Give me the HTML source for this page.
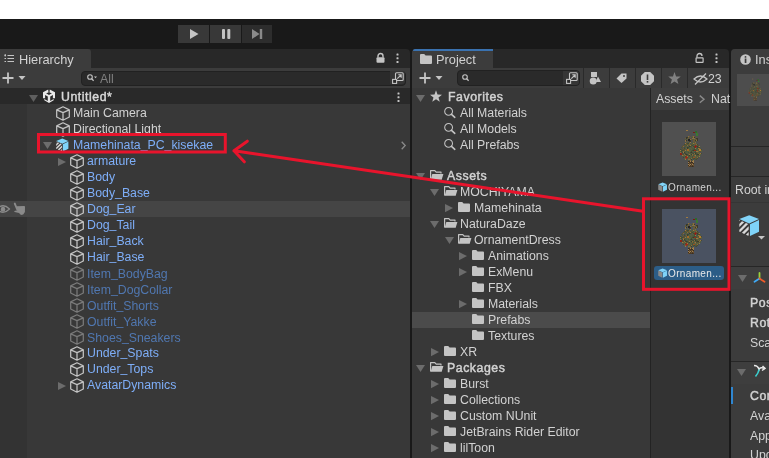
<!DOCTYPE html>
<html><head><meta charset="utf-8">
<style>
*{margin:0;padding:0;box-sizing:border-box}
html,body{width:769px;height:458px;overflow:hidden;background:#ffffff;font-family:"Liberation Sans",sans-serif;font-size:12.3px;color:#d2d2d2}
.a{position:absolute}
.pb{position:absolute;top:25px;height:18px;background:#383838}
.tabbar{background:#282828}
.tab{background:#3c3c3c}
.t{position:absolute;white-space:nowrap;line-height:16px;height:16px;-webkit-font-smoothing:antialiased;will-change:transform}
.b{font-weight:normal;-webkit-text-stroke:0.45px currentColor;letter-spacing:0.55px}
.u{position:relative;top:-1.5px}
.blue{color:#7eaef8}
.dim{color:#5077b0}
svg{position:absolute;overflow:visible}
</style></head><body>
<div class="a" style="left:0;top:19px;width:769px;height:30px;background:#191919"></div>
<div class="pb" style="left:178px;width:31px"></div>
<div class="pb" style="left:210px;width:31px"></div>
<div class="pb" style="left:242px;width:30px;background:#2d2d2d"></div>
<svg style="left:0;top:0" width="769" height="60">
 <path d="M190 29 L198.5 34 L190 39 Z" fill="#c4c4c4"/>
 <rect x="222" y="29" width="3" height="10" rx="1" fill="#c4c4c4"/>
 <rect x="227.3" y="29" width="3" height="10" rx="1" fill="#c4c4c4"/>
 <path d="M252 29 L259.5 34 L252 39 Z" fill="#8a8a8a"/>
 <rect x="259.8" y="29" width="2.4" height="10" fill="#8a8a8a"/>
</svg>
<div class="a" style="left:0;top:48px;width:769px;height:410px;background:#191919"></div>

<div class="a tabbar" style="left:0;top:49px;width:410px;height:19px;border-radius:0 4px 0 0"></div>
<div class="a tab" style="left:0;top:49px;width:91px;height:19px;border-radius:0 3px 0 0"></div>
<div class="a" style="left:0;top:68px;width:410px;height:20px;background:#3c3c3c"></div>
<div class="a" style="left:81px;top:70.5px;width:325px;height:15px;background:#2a2a2a;border:1px solid #212121;border-radius:4px"></div>
<div class="a" style="left:390px;top:71px;width:15px;height:13px;background:#353535;border-radius:0 3px 3px 0"></div>
<div class="a" style="left:0;top:88px;width:410px;height:16px;background:#292929"></div>
<div class="a" style="left:0;top:104px;width:410px;height:354px;background:#383838"></div>
<div class="a" style="left:0;top:104px;width:27px;height:354px;background:#333333"></div>
<div class="a" style="left:0;top:201px;width:410px;height:16px;background:#454545"></div>

<svg style="left:4px;top:54px" width="10" height="9" viewBox="0 0 10 9"><path d="M0.5 1.5 H2 M0.5 4.5 H2 M0.5 7.5 H2 M3.5 1.5 H10 M3.5 4.5 H10 M3.5 7.5 H10" stroke="#c4c4c4" stroke-width="1.1"/><path d="M1.2 0 V2.5" stroke="#c4c4c4" stroke-width="1"/></svg>
<div class="t " style="left:18.5px;top:51.5px;font-size:12.8px">Hierarchy</div>
<svg style="left:376px;top:53px" width="9" height="10" viewBox="0 0 9 10"><path d="M2 4.5 V3 A2.5 2.5 0 0 1 7 3 V4.5" fill="none" stroke="#c4c4c4" stroke-width="1.4"/><rect x="0.5" y="4.2" width="8" height="5.5" rx="1" fill="#c4c4c4"/></svg>
<svg style="left:395.5px;top:53px" width="3" height="10"><rect x="0.5" y="0.5" width="2" height="2" rx="0.5" fill="#c4c4c4"/><rect x="0.5" y="4.2" width="2" height="2" rx="0.5" fill="#c4c4c4"/><rect x="0.5" y="7.9" width="2" height="2" rx="0.5" fill="#c4c4c4"/></svg>
<svg style="left:2px;top:72px" width="22" height="12"><path d="M6 0.5 V11.5 M0.5 6 H11.5" stroke="#c4c4c4" stroke-width="1.8"/><path d="M16.5 4 H23.5 L20 8 Z" fill="#c4c4c4"/></svg>
<svg style="left:87px;top:74px" width="10" height="8"><circle cx="3" cy="3" r="2.3" fill="none" stroke="#c4c4c4" stroke-width="1.1"/><path d="M4.6 4.6 L6.6 6.8" stroke="#c4c4c4" stroke-width="1.3"/><path d="M7 2.4 H10 L8.5 4.2 Z" fill="#c4c4c4"/></svg>
<div class="t " style="left:100px;top:71px;color:#7f7f7f">All</div>
<svg style="left:392px;top:72px" width="12" height="12" viewBox="0 0 12 12"><rect x="3.5" y="0.8" width="7.7" height="7.7" rx="1" fill="none" stroke="#c4c4c4" stroke-width="1.1"/><rect x="0.6" y="7.4" width="4" height="4" fill="#2a2a2a" stroke="#c4c4c4" stroke-width="1.1"/><path d="M5.3 6.7 L9 3 M6.3 2.8 H9.2 V5.7" fill="none" stroke="#c4c4c4" stroke-width="1.1"/></svg>
<svg style="left:29px;top:94.5px" width="9" height="7" viewBox="0 0 9 7"><path d="M0 0 H9 L4.5 7 Z" fill="#5e5e5e"/></svg>
<svg style="left:42px;top:89.4px" width="14" height="15" viewBox="0 0 14 15">
<path d="M6.2 0.6 L1 3.3 L1 9.3 L3.1 9.3 L3.1 6.1 L5.8 7.5 L5.8 11.9 L2.3 9.9 L2.3 11.3 L7 14 L11.7 11.3 L11.7 9.9 L8.2 11.9 L8.2 7.5 L10.9 6.1 L10.9 9.3 L13 9.3 L13 3.3 L7.8 0.6 L7.5 3.4 L9.9 4.3 L7 5.9 L4.1 4.3 L6.5 3.4 Z" fill="#e8e8e8"/>
</svg>
<div class="t b" style="left:60.5px;top:89px;color:#d8d8d8">Untitled*</div>
<svg style="left:396.5px;top:92px" width="3" height="10"><rect x="0.5" y="0.5" width="2" height="2" rx="0.5" fill="#c4c4c4"/><rect x="0.5" y="4.2" width="2" height="2" rx="0.5" fill="#c4c4c4"/><rect x="0.5" y="7.9" width="2" height="2" rx="0.5" fill="#c4c4c4"/></svg>
<svg style="left:56px;top:105.5px" width="14" height="15" viewBox="0 0 14 15"><path d="M7 0.8 L13.3 3.9 V11 L7 14.2 L0.7 11 V3.9 Z M0.7 3.9 L7 6.6 L13.3 3.9 M7 6.6 V14.2" fill="none" stroke="#c4c4c4" stroke-width="1.25" stroke-linejoin="round"/></svg>
<div class="t " style="left:72.8px;top:105px;">Main Camera</div>
<svg style="left:56px;top:121.5px" width="14" height="15" viewBox="0 0 14 15"><path d="M7 0.8 L13.3 3.9 V11 L7 14.2 L0.7 11 V3.9 Z M0.7 3.9 L7 6.6 L13.3 3.9 M7 6.6 V14.2" fill="none" stroke="#c4c4c4" stroke-width="1.25" stroke-linejoin="round"/></svg>
<div class="t " style="left:72.8px;top:121px;">Directional Light</div>
<svg style="left:43px;top:142.3px" width="9" height="7" viewBox="0 0 9 7"><path d="M0 0 H9 L4.5 7 Z" fill="#6c6c6c"/></svg>
<svg style="left:56px;top:137.5px" width="13" height="14" viewBox="0 0 13 14">
<path d="M6.3 0.6 L12.4 3 L6.3 5.8 L0.2 3 Z" fill="#82d4f8"/>
<path d="M0.2 3.6 L6 6.3 V13.5 L0.2 10.8 Z" fill="#3a3a3a"/>
<path d="M0.20 4.40 L0.20 3.60 L0.75 3.85 Z M0.20 8.00 L0.20 6.00 L1.84 4.36 L3.20 5.00 Z M0.20 9.60 L4.29 5.51 L5.66 6.14 L0.75 11.05 L0.20 10.80 Z M6.00 7.40 L6.00 9.40 L3.20 12.20 L1.84 11.56 Z M6.00 11.00 L6.00 13.00 L5.66 13.34 L4.29 12.71 Z" fill="#d8d8d8"/>
<path d="M6.8 6.3 L12.4 3.6 V10.8 L6.8 13.5 Z" fill="#7fd4f9"/>
</svg>
<div class="t blue" style="left:72.9px;top:137px;">Mamehinata<span class="u">_</span>PC<span class="u">_</span>kisekae</div>
<svg style="left:400.5px;top:141px" width="5" height="9"><path d="M0.7 0.7 L4.2 4.5 L0.7 8.3" fill="none" stroke="#8a8a8a" stroke-width="1.3"/></svg>
<svg style="left:58px;top:158.0px" width="8" height="8" viewBox="0 0 8 8"><path d="M0 0 L8 4.0 L0 8 Z" fill="#6c6c6c"/></svg>
<svg style="left:69.5px;top:153.5px" width="14" height="15" viewBox="0 0 14 15"><path d="M7 0.8 L13.3 3.9 V11 L7 14.2 L0.7 11 V3.9 Z M0.7 3.9 L7 6.6 L13.3 3.9 M7 6.6 V14.2" fill="none" stroke="#c4c4c4" stroke-width="1.25" stroke-linejoin="round"/></svg>
<div class="t blue" style="left:86.8px;top:153px;">armature</div>
<svg style="left:69.5px;top:169.5px" width="14" height="15" viewBox="0 0 14 15"><path d="M7 0.8 L13.3 3.9 V11 L7 14.2 L0.7 11 V3.9 Z M0.7 3.9 L7 6.6 L13.3 3.9 M7 6.6 V14.2" fill="none" stroke="#c4c4c4" stroke-width="1.25" stroke-linejoin="round"/></svg>
<div class="t blue" style="left:86.8px;top:169px;">Body</div>
<svg style="left:69.5px;top:185.5px" width="14" height="15" viewBox="0 0 14 15"><path d="M7 0.8 L13.3 3.9 V11 L7 14.2 L0.7 11 V3.9 Z M0.7 3.9 L7 6.6 L13.3 3.9 M7 6.6 V14.2" fill="none" stroke="#c4c4c4" stroke-width="1.25" stroke-linejoin="round"/></svg>
<div class="t blue" style="left:86.8px;top:185px;">Body<span class="u">_</span>Base</div>
<svg style="left:69.5px;top:201.5px" width="14" height="15" viewBox="0 0 14 15"><path d="M7 0.8 L13.3 3.9 V11 L7 14.2 L0.7 11 V3.9 Z M0.7 3.9 L7 6.6 L13.3 3.9 M7 6.6 V14.2" fill="none" stroke="#c4c4c4" stroke-width="1.25" stroke-linejoin="round"/></svg>
<div class="t blue" style="left:86.8px;top:201px;">Dog<span class="u">_</span>Ear</div>
<svg style="left:69.5px;top:217.5px" width="14" height="15" viewBox="0 0 14 15"><path d="M7 0.8 L13.3 3.9 V11 L7 14.2 L0.7 11 V3.9 Z M0.7 3.9 L7 6.6 L13.3 3.9 M7 6.6 V14.2" fill="none" stroke="#c4c4c4" stroke-width="1.25" stroke-linejoin="round"/></svg>
<div class="t blue" style="left:86.8px;top:217px;">Dog<span class="u">_</span>Tail</div>
<svg style="left:69.5px;top:233.5px" width="14" height="15" viewBox="0 0 14 15"><path d="M7 0.8 L13.3 3.9 V11 L7 14.2 L0.7 11 V3.9 Z M0.7 3.9 L7 6.6 L13.3 3.9 M7 6.6 V14.2" fill="none" stroke="#c4c4c4" stroke-width="1.25" stroke-linejoin="round"/></svg>
<div class="t blue" style="left:86.8px;top:233px;">Hair<span class="u">_</span>Back</div>
<svg style="left:69.5px;top:249.5px" width="14" height="15" viewBox="0 0 14 15"><path d="M7 0.8 L13.3 3.9 V11 L7 14.2 L0.7 11 V3.9 Z M0.7 3.9 L7 6.6 L13.3 3.9 M7 6.6 V14.2" fill="none" stroke="#c4c4c4" stroke-width="1.25" stroke-linejoin="round"/></svg>
<div class="t blue" style="left:86.8px;top:249px;">Hair<span class="u">_</span>Base</div>
<svg style="left:69.5px;top:265.5px" width="14" height="15" viewBox="0 0 14 15"><path d="M7 0.8 L13.3 3.9 V11 L7 14.2 L0.7 11 V3.9 Z M0.7 3.9 L7 6.6 L13.3 3.9 M7 6.6 V14.2" fill="none" stroke="#7a7a7a" stroke-width="1.25" stroke-linejoin="round"/></svg>
<div class="t dim" style="left:86.8px;top:265.8px;">Item<span class="u">_</span>BodyBag</div>
<svg style="left:69.5px;top:281.5px" width="14" height="15" viewBox="0 0 14 15"><path d="M7 0.8 L13.3 3.9 V11 L7 14.2 L0.7 11 V3.9 Z M0.7 3.9 L7 6.6 L13.3 3.9 M7 6.6 V14.2" fill="none" stroke="#7a7a7a" stroke-width="1.25" stroke-linejoin="round"/></svg>
<div class="t dim" style="left:86.8px;top:281.8px;">Item<span class="u">_</span>DogCollar</div>
<svg style="left:69.5px;top:297.5px" width="14" height="15" viewBox="0 0 14 15"><path d="M7 0.8 L13.3 3.9 V11 L7 14.2 L0.7 11 V3.9 Z M0.7 3.9 L7 6.6 L13.3 3.9 M7 6.6 V14.2" fill="none" stroke="#7a7a7a" stroke-width="1.25" stroke-linejoin="round"/></svg>
<div class="t dim" style="left:86.8px;top:297.8px;">Outfit<span class="u">_</span>Shorts</div>
<svg style="left:69.5px;top:313.5px" width="14" height="15" viewBox="0 0 14 15"><path d="M7 0.8 L13.3 3.9 V11 L7 14.2 L0.7 11 V3.9 Z M0.7 3.9 L7 6.6 L13.3 3.9 M7 6.6 V14.2" fill="none" stroke="#7a7a7a" stroke-width="1.25" stroke-linejoin="round"/></svg>
<div class="t dim" style="left:86.8px;top:313.8px;">Outfit<span class="u">_</span>Yakke</div>
<svg style="left:69.5px;top:329.5px" width="14" height="15" viewBox="0 0 14 15"><path d="M7 0.8 L13.3 3.9 V11 L7 14.2 L0.7 11 V3.9 Z M0.7 3.9 L7 6.6 L13.3 3.9 M7 6.6 V14.2" fill="none" stroke="#7a7a7a" stroke-width="1.25" stroke-linejoin="round"/></svg>
<div class="t dim" style="left:86.8px;top:329.8px;">Shoes<span class="u">_</span>Sneakers</div>
<svg style="left:69.5px;top:345.5px" width="14" height="15" viewBox="0 0 14 15"><path d="M7 0.8 L13.3 3.9 V11 L7 14.2 L0.7 11 V3.9 Z M0.7 3.9 L7 6.6 L13.3 3.9 M7 6.6 V14.2" fill="none" stroke="#c4c4c4" stroke-width="1.25" stroke-linejoin="round"/></svg>
<div class="t blue" style="left:86.8px;top:345px;">Under<span class="u">_</span>Spats</div>
<svg style="left:69.5px;top:361.5px" width="14" height="15" viewBox="0 0 14 15"><path d="M7 0.8 L13.3 3.9 V11 L7 14.2 L0.7 11 V3.9 Z M0.7 3.9 L7 6.6 L13.3 3.9 M7 6.6 V14.2" fill="none" stroke="#c4c4c4" stroke-width="1.25" stroke-linejoin="round"/></svg>
<div class="t blue" style="left:86.8px;top:361px;">Under<span class="u">_</span>Tops</div>
<svg style="left:58px;top:382.0px" width="8" height="8" viewBox="0 0 8 8"><path d="M0 0 L8 4.0 L0 8 Z" fill="#6c6c6c"/></svg>
<svg style="left:69.5px;top:377.5px" width="14" height="15" viewBox="0 0 14 15"><path d="M7 0.8 L13.3 3.9 V11 L7 14.2 L0.7 11 V3.9 Z M0.7 3.9 L7 6.6 L13.3 3.9 M7 6.6 V14.2" fill="none" stroke="#c4c4c4" stroke-width="1.25" stroke-linejoin="round"/></svg>
<div class="t blue" style="left:86.8px;top:377px;">AvatarDynamics</div>
<svg style="left:-4px;top:204px" width="14" height="10" viewBox="0 0 14 10"><path d="M0.5 5 Q7 -1.5 13.5 5 Q7 11.5 0.5 5 Z" fill="none" stroke="#8a8a8a" stroke-width="1.2"/><path d="M4.5 5.5 A2.6 2.6 0 0 0 9.5 5.5 Z" fill="#8a8a8a"/><circle cx="7" cy="5" r="2.2" fill="#8a8a8a"/></svg>
<svg style="left:13px;top:202px" width="13" height="14" viewBox="0 0 13 14"><path d="M1.8 1.6 L4.2 7.5" stroke="#8a8a8a" stroke-width="1.9" stroke-linecap="round"/><path d="M3.8 4.3 L11.3 4 Q12 4 12 5 L11.9 10 L10.2 12.6 L8 13 L6 11 L1.6 9.9 Q1 9.5 1.4 8.9 L4.3 8.2 Z" fill="#8a8a8a"/></svg>
<div class="a tabbar" style="left:412px;top:49px;width:317px;height:19px;border-radius:4px 4px 0 0"></div>
<div class="a tab" style="left:412px;top:49px;width:81px;height:19px;border-radius:4px 3px 0 0"></div>
<div class="a" style="left:413px;top:49px;width:80px;height:2px;background:#3a72b0;border-radius:2px 0 0 0"></div>
<div class="a" style="left:412px;top:68px;width:317px;height:20px;background:#3c3c3c"></div>
<div class="a" style="left:457px;top:70px;width:123px;height:15.5px;background:#2a2a2a;border:1px solid #212121;border-radius:4px"></div>
<div class="a" style="left:563px;top:71px;width:16px;height:13.5px;background:#353535;border-radius:0 3px 3px 0"></div>
<div class="a" style="left:583px;top:68px;width:1px;height:20px;background:#2a2a2a"></div>
<div class="a" style="left:609px;top:68px;width:1px;height:20px;background:#2a2a2a"></div>
<div class="a" style="left:635px;top:68px;width:1px;height:20px;background:#2a2a2a"></div>
<div class="a" style="left:661px;top:68px;width:1px;height:20px;background:#2a2a2a"></div>
<div class="a" style="left:687px;top:68px;width:1px;height:20px;background:#2a2a2a"></div>
<div class="a" style="left:412px;top:88px;width:238px;height:370px;background:#383838"></div>
<div class="a" style="left:412px;top:312px;width:238px;height:16px;background:#4b4b4b"></div>
<div class="a" style="left:650px;top:88px;width:1px;height:370px;background:#232323"></div>
<div class="a" style="left:651px;top:88px;width:78px;height:370px;background:#333333"></div>
<div class="a" style="left:651px;top:88px;width:78px;height:22px;background:#3e3e3e"></div>

<svg style="left:420px;top:54px" width="12" height="10" viewBox="0 0 12 10"><path d="M0 1 Q0 0 1 0 H4.2 L5.6 1.6 H11 Q12 1.6 12 2.6 V9 Q12 10 11 10 H1 Q0 10 0 9 Z" fill="#c4c4c4"/></svg>
<div class="t " style="left:435.5px;top:51.5px;font-size:12.8px">Project</div>
<svg style="left:694.5px;top:53px" width="9" height="10" viewBox="0 0 9 10"><path d="M2 4.5 V3 A2.5 2.5 0 0 1 7 3" fill="none" stroke="#c4c4c4" stroke-width="1.3"/><rect x="1.1" y="4.8" width="7" height="4.6" rx="0.5" fill="none" stroke="#c4c4c4" stroke-width="1.2"/></svg>
<svg style="left:714.5px;top:53px" width="3" height="10"><rect x="0.5" y="0.5" width="2" height="2" rx="0.5" fill="#c4c4c4"/><rect x="0.5" y="4.2" width="2" height="2" rx="0.5" fill="#c4c4c4"/><rect x="0.5" y="7.9" width="2" height="2" rx="0.5" fill="#c4c4c4"/></svg>
<svg style="left:419px;top:72px" width="24" height="12"><path d="M6 0.5 V11.5 M0.5 6 H11.5" stroke="#c4c4c4" stroke-width="1.8"/><path d="M16.5 4 H23.5 L20 8 Z" fill="#c4c4c4"/></svg>
<svg style="left:462px;top:74px" width="8" height="8"><circle cx="3" cy="3" r="2.3" fill="none" stroke="#c4c4c4" stroke-width="1.1"/><path d="M4.6 4.6 L6.6 6.8" stroke="#c4c4c4" stroke-width="1.3"/></svg>
<svg style="left:566px;top:72px" width="12" height="12" viewBox="0 0 12 12"><rect x="3.5" y="0.8" width="7.7" height="7.7" rx="1" fill="none" stroke="#c4c4c4" stroke-width="1.1"/><rect x="0.6" y="7.4" width="4" height="4" fill="#2a2a2a" stroke="#c4c4c4" stroke-width="1.1"/><path d="M5.3 6.7 L9 3 M6.3 2.8 H9.2 V5.7" fill="none" stroke="#c4c4c4" stroke-width="1.1"/></svg>
<svg style="left:589px;top:72px" width="14" height="13" viewBox="0 0 14 13"><rect x="2" y="0" width="6" height="5" fill="#c4c4c4"/><circle cx="4.2" cy="9" r="3.5" fill="#c4c4c4"/><path d="M9 4.5 L12 10 H6.5 Z" fill="#c4c4c4"/></svg>
<svg style="left:616px;top:73px" width="11" height="10" viewBox="0 0 11 10"><path d="M0.5 5.5 L5.5 0.5 H10.5 V5.5 L5.5 10 Z" fill="#c4c4c4"/><circle cx="8" cy="3" r="1" fill="#3c3c3c"/></svg>
<svg style="left:641px;top:71.5px" width="13" height="13" viewBox="0 0 13 13"><path d="M3.8 0 H9.2 L13 3.8 V9.2 L9.2 13 H3.8 L0 9.2 V3.8 Z" fill="#c4c4c4"/><rect x="5.7" y="2.5" width="1.6" height="5.5" fill="#3c3c3c"/><rect x="5.7" y="9" width="1.6" height="1.6" fill="#3c3c3c"/></svg>
<svg style="left:667.5px;top:72px" width="13" height="12" viewBox="0 0 24 23"><path d="M12 0 L15 8.5 L24 8.8 L17 14.3 L19.5 23 L12 18 L4.5 23 L7 14.3 L0 8.8 L9 8.5 Z" fill="#808080"/></svg>
<svg style="left:693px;top:72px" width="15" height="13" viewBox="0 0 15 13"><path d="M1 7 Q7.5 1 14 7 Q7.5 13 1 7 Z" fill="none" stroke="#c4c4c4" stroke-width="1.2"/><path d="M2 12.5 L13 1.5" stroke="#c4c4c4" stroke-width="1.3"/></svg>
<div class="t " style="left:707.5px;top:71px;">23</div>
<svg style="left:416px;top:94.5px" width="9" height="7" viewBox="0 0 9 7"><path d="M0 0 H9 L4.5 7 Z" fill="#6c6c6c"/></svg>
<svg style="left:430px;top:90px" width="12" height="12" viewBox="0 0 24 23"><path d="M12 0 L15 8.5 L24 8.8 L17 14.3 L19.5 23 L12 18 L4.5 23 L7 14.3 L0 8.8 L9 8.5 Z" fill="#c4c4c4"/></svg>
<div class="t b" style="left:447.5px;top:89px;">Favorites</div>
<svg style="left:444px;top:107.3px" width="12" height="11" viewBox="0 0 12 11"><circle cx="4.6" cy="4.4" r="3.9" fill="none" stroke="#c4c4c4" stroke-width="1.05"/><path d="M7.5 7.3 L10.8 10.3" stroke="#c4c4c4" stroke-width="1.6" stroke-linecap="round"/></svg>
<div class="t " style="left:460.4px;top:105px;">All Materials</div>
<svg style="left:444px;top:123.3px" width="12" height="11" viewBox="0 0 12 11"><circle cx="4.6" cy="4.4" r="3.9" fill="none" stroke="#c4c4c4" stroke-width="1.05"/><path d="M7.5 7.3 L10.8 10.3" stroke="#c4c4c4" stroke-width="1.6" stroke-linecap="round"/></svg>
<div class="t " style="left:460.4px;top:121px;">All Models</div>
<svg style="left:444px;top:139.3px" width="12" height="11" viewBox="0 0 12 11"><circle cx="4.6" cy="4.4" r="3.9" fill="none" stroke="#c4c4c4" stroke-width="1.05"/><path d="M7.5 7.3 L10.8 10.3" stroke="#c4c4c4" stroke-width="1.6" stroke-linecap="round"/></svg>
<div class="t " style="left:460.4px;top:137px;">All Prefabs</div>
<svg style="left:416px;top:173.1px" width="9" height="7" viewBox="0 0 9 7"><path d="M0 0 H9 L4.5 7 Z" fill="#6c6c6c"/></svg>
<svg style="left:429.5px;top:169.6px" width="14" height="10" viewBox="0 0 14 10"><path d="M0.6 9.4 V0.6 H4.8 L6.2 2.2 H11 V3.6" fill="none" stroke="#c4c4c4" stroke-width="1.2" stroke-linejoin="round"/><path d="M2.3 4 H13.4 L11.7 9.8 H0.6 Z" fill="#c4c4c4"/></svg>
<div class="t b" style="left:447px;top:168.1px;">Assets</div>
<svg style="left:430.4px;top:189.1px" width="9" height="7" viewBox="0 0 9 7"><path d="M0 0 H9 L4.5 7 Z" fill="#6c6c6c"/></svg>
<svg style="left:444px;top:185.6px" width="14" height="10" viewBox="0 0 14 10"><path d="M0.6 9.4 V0.6 H4.8 L6.2 2.2 H11 V3.6" fill="none" stroke="#c4c4c4" stroke-width="1.2" stroke-linejoin="round"/><path d="M2.3 4 H13.4 L11.7 9.8 H0.6 Z" fill="#c4c4c4"/></svg>
<div class="t " style="left:459.7px;top:184.1px;">MOCHIYAMA</div>
<svg style="left:445.2px;top:203.79999999999998px" width="8" height="8.2" viewBox="0 0 8 8.2"><path d="M0 0 L8 4.1 L0 8.2 Z" fill="#6c6c6c"/></svg>
<svg style="left:458px;top:202.1px" width="12" height="10" viewBox="0 0 12 10"><path d="M0 1 Q0 0 1 0 H4.2 L5.6 1.6 H11 Q12 1.6 12 2.6 V9 Q12 10 11 10 H1 Q0 10 0 9 Z" fill="#c4c4c4"/></svg>
<div class="t " style="left:473.8px;top:200.1px;">Mamehinata</div>
<svg style="left:430.4px;top:221.1px" width="9" height="7" viewBox="0 0 9 7"><path d="M0 0 H9 L4.5 7 Z" fill="#6c6c6c"/></svg>
<svg style="left:444px;top:217.6px" width="14" height="10" viewBox="0 0 14 10"><path d="M0.6 9.4 V0.6 H4.8 L6.2 2.2 H11 V3.6" fill="none" stroke="#c4c4c4" stroke-width="1.2" stroke-linejoin="round"/><path d="M2.3 4 H13.4 L11.7 9.8 H0.6 Z" fill="#c4c4c4"/></svg>
<div class="t " style="left:459.7px;top:216.1px;">NaturaDaze</div>
<svg style="left:444.5px;top:237.1px" width="9" height="7" viewBox="0 0 9 7"><path d="M0 0 H9 L4.5 7 Z" fill="#6c6c6c"/></svg>
<svg style="left:457.9px;top:233.6px" width="14" height="10" viewBox="0 0 14 10"><path d="M0.6 9.4 V0.6 H4.8 L6.2 2.2 H11 V3.6" fill="none" stroke="#c4c4c4" stroke-width="1.2" stroke-linejoin="round"/><path d="M2.3 4 H13.4 L11.7 9.8 H0.6 Z" fill="#c4c4c4"/></svg>
<div class="t " style="left:473.8px;top:232.1px;">OrnamentDress</div>
<svg style="left:459px;top:251.79999999999998px" width="8" height="8.2" viewBox="0 0 8 8.2"><path d="M0 0 L8 4.1 L0 8.2 Z" fill="#6c6c6c"/></svg>
<svg style="left:471.5px;top:250.1px" width="12" height="10" viewBox="0 0 12 10"><path d="M0 1 Q0 0 1 0 H4.2 L5.6 1.6 H11 Q12 1.6 12 2.6 V9 Q12 10 11 10 H1 Q0 10 0 9 Z" fill="#c4c4c4"/></svg>
<div class="t " style="left:488px;top:248.1px;">Animations</div>
<svg style="left:459px;top:267.8px" width="8" height="8.2" viewBox="0 0 8 8.2"><path d="M0 0 L8 4.1 L0 8.2 Z" fill="#6c6c6c"/></svg>
<svg style="left:471.5px;top:266.1px" width="12" height="10" viewBox="0 0 12 10"><path d="M0 1 Q0 0 1 0 H4.2 L5.6 1.6 H11 Q12 1.6 12 2.6 V9 Q12 10 11 10 H1 Q0 10 0 9 Z" fill="#c4c4c4"/></svg>
<div class="t " style="left:488px;top:264.1px;">ExMenu</div>
<svg style="left:471.5px;top:282.1px" width="12" height="10" viewBox="0 0 12 10"><path d="M0 1 Q0 0 1 0 H4.2 L5.6 1.6 H11 Q12 1.6 12 2.6 V9 Q12 10 11 10 H1 Q0 10 0 9 Z" fill="#c4c4c4"/></svg>
<div class="t " style="left:488px;top:280.1px;">FBX</div>
<svg style="left:459px;top:299.8px" width="8" height="8.2" viewBox="0 0 8 8.2"><path d="M0 0 L8 4.1 L0 8.2 Z" fill="#6c6c6c"/></svg>
<svg style="left:471.5px;top:298.1px" width="12" height="10" viewBox="0 0 12 10"><path d="M0 1 Q0 0 1 0 H4.2 L5.6 1.6 H11 Q12 1.6 12 2.6 V9 Q12 10 11 10 H1 Q0 10 0 9 Z" fill="#c4c4c4"/></svg>
<div class="t " style="left:488px;top:296.1px;">Materials</div>
<svg style="left:471.5px;top:314.1px" width="12" height="10" viewBox="0 0 12 10"><path d="M0 1 Q0 0 1 0 H4.2 L5.6 1.6 H11 Q12 1.6 12 2.6 V9 Q12 10 11 10 H1 Q0 10 0 9 Z" fill="#c4c4c4"/></svg>
<div class="t " style="left:488px;top:312.1px;">Prefabs</div>
<svg style="left:471.5px;top:330.1px" width="12" height="10" viewBox="0 0 12 10"><path d="M0 1 Q0 0 1 0 H4.2 L5.6 1.6 H11 Q12 1.6 12 2.6 V9 Q12 10 11 10 H1 Q0 10 0 9 Z" fill="#c4c4c4"/></svg>
<div class="t " style="left:488px;top:328.1px;">Textures</div>
<svg style="left:431px;top:347.8px" width="8" height="8.2" viewBox="0 0 8 8.2"><path d="M0 0 L8 4.1 L0 8.2 Z" fill="#6c6c6c"/></svg>
<svg style="left:444px;top:346.1px" width="12" height="10" viewBox="0 0 12 10"><path d="M0 1 Q0 0 1 0 H4.2 L5.6 1.6 H11 Q12 1.6 12 2.6 V9 Q12 10 11 10 H1 Q0 10 0 9 Z" fill="#c4c4c4"/></svg>
<div class="t " style="left:459.7px;top:344.1px;">XR</div>
<svg style="left:416px;top:365.1px" width="9" height="7" viewBox="0 0 9 7"><path d="M0 0 H9 L4.5 7 Z" fill="#6c6c6c"/></svg>
<svg style="left:429.5px;top:361.6px" width="14" height="10" viewBox="0 0 14 10"><path d="M0.6 9.4 V0.6 H4.8 L6.2 2.2 H11 V3.6" fill="none" stroke="#c4c4c4" stroke-width="1.2" stroke-linejoin="round"/><path d="M2.3 4 H13.4 L11.7 9.8 H0.6 Z" fill="#c4c4c4"/></svg>
<div class="t b" style="left:447px;top:360.1px;">Packages</div>
<svg style="left:431px;top:379.8px" width="8" height="8.2" viewBox="0 0 8 8.2"><path d="M0 0 L8 4.1 L0 8.2 Z" fill="#6c6c6c"/></svg>
<svg style="left:444px;top:378.1px" width="12" height="10" viewBox="0 0 12 10"><path d="M0 1 Q0 0 1 0 H4.2 L5.6 1.6 H11 Q12 1.6 12 2.6 V9 Q12 10 11 10 H1 Q0 10 0 9 Z" fill="#c4c4c4"/></svg>
<div class="t " style="left:459.7px;top:376.1px;">Burst</div>
<svg style="left:431px;top:395.8px" width="8" height="8.2" viewBox="0 0 8 8.2"><path d="M0 0 L8 4.1 L0 8.2 Z" fill="#6c6c6c"/></svg>
<svg style="left:444px;top:394.1px" width="12" height="10" viewBox="0 0 12 10"><path d="M0 1 Q0 0 1 0 H4.2 L5.6 1.6 H11 Q12 1.6 12 2.6 V9 Q12 10 11 10 H1 Q0 10 0 9 Z" fill="#c4c4c4"/></svg>
<div class="t " style="left:459.7px;top:392.1px;">Collections</div>
<svg style="left:431px;top:411.8px" width="8" height="8.2" viewBox="0 0 8 8.2"><path d="M0 0 L8 4.1 L0 8.2 Z" fill="#6c6c6c"/></svg>
<svg style="left:444px;top:410.1px" width="12" height="10" viewBox="0 0 12 10"><path d="M0 1 Q0 0 1 0 H4.2 L5.6 1.6 H11 Q12 1.6 12 2.6 V9 Q12 10 11 10 H1 Q0 10 0 9 Z" fill="#c4c4c4"/></svg>
<div class="t " style="left:459.7px;top:408.1px;">Custom NUnit</div>
<svg style="left:431px;top:427.8px" width="8" height="8.2" viewBox="0 0 8 8.2"><path d="M0 0 L8 4.1 L0 8.2 Z" fill="#6c6c6c"/></svg>
<svg style="left:444px;top:426.1px" width="12" height="10" viewBox="0 0 12 10"><path d="M0 1 Q0 0 1 0 H4.2 L5.6 1.6 H11 Q12 1.6 12 2.6 V9 Q12 10 11 10 H1 Q0 10 0 9 Z" fill="#c4c4c4"/></svg>
<div class="t " style="left:459.7px;top:424.1px;">JetBrains Rider Editor</div>
<svg style="left:431px;top:443.8px" width="8" height="8.2" viewBox="0 0 8 8.2"><path d="M0 0 L8 4.1 L0 8.2 Z" fill="#6c6c6c"/></svg>
<svg style="left:444px;top:442.1px" width="12" height="10" viewBox="0 0 12 10"><path d="M0 1 Q0 0 1 0 H4.2 L5.6 1.6 H11 Q12 1.6 12 2.6 V9 Q12 10 11 10 H1 Q0 10 0 9 Z" fill="#c4c4c4"/></svg>
<div class="t " style="left:459.7px;top:440.1px;">lilToon</div>
<div class="t " style="left:655.5px;top:90.5px;">Assets</div>
<svg style="left:699px;top:94.5px" width="6" height="9"><path d="M0.8 0.6 L5 4.2 L0.8 7.8" fill="none" stroke="#8a8a8a" stroke-width="1.4"/></svg>
<div class="t " style="left:710.5px;top:90.5px;">Nat</div>
<div class="a" style="left:662px;top:122px;width:54px;height:54px;background:#505050"></div>
<div class="a" style="left:662px;top:209px;width:54px;height:54px;background:#4a5261"></div>
<div class="a" style="left:654px;top:266px;width:70px;height:14px;background:#2c5d87;border-radius:3px"></div>
<div class="a tabbar" style="left:731px;top:49px;width:38px;height:19px;border-radius:4px 0 0 0"></div>
<div class="a tab" style="left:731px;top:49px;width:38px;height:19px;border-radius:4px 0 0 0"></div>
<div class="a" style="left:731px;top:68px;width:38px;height:390px;background:#3c3c3c"></div>
<div class="a" style="left:736.5px;top:74px;width:33px;height:32px;background:#4d4d4d"></div>
<div class="a" style="left:731px;top:146px;width:38px;height:1px;background:#262626"></div>
<div class="a" style="left:731px;top:175.5px;width:38px;height:1px;background:#262626"></div>
<div class="a" style="left:731px;top:202px;width:38px;height:1px;background:#353535"></div>
<div class="a" style="left:731px;top:266px;width:38px;height:1px;background:#262626"></div>
<div class="a" style="left:731px;top:267px;width:38px;height:22px;background:#3e3e3e"></div>
<div class="a" style="left:731px;top:360.5px;width:38px;height:1px;background:#262626"></div>
<div class="a" style="left:731px;top:361.5px;width:38px;height:22px;background:#3e3e3e"></div>
<div class="a" style="left:731px;top:386.5px;width:2px;height:17px;background:#2f86d0"></div>

<svg style="left:739.5px;top:53.5px" width="11" height="11" viewBox="0 0 11 11"><circle cx="5.5" cy="5.5" r="5.3" fill="#c4c4c4"/><rect x="4.7" y="4.5" width="1.7" height="4.5" fill="#3c3c3c"/><circle cx="5.5" cy="2.9" r="0.95" fill="#3c3c3c"/></svg>
<div class="t " style="left:755px;top:51.5px;font-size:12.8px">Inspector</div>
<div class="t " style="left:735.2px;top:182px;">Root in GameObject</div>
<svg style="left:738.5px;top:213.5px" width="21" height="23" viewBox="0 0 13 14"><path d="M6.3 0.6 L12.4 3 L6.3 5.8 L0.2 3 Z" fill="#82d4f8"/><path d="M0.2 3.6 L6 6.3 V13.5 L0.2 10.8 Z" fill="#3a3a3a"/><path d="M0.20 4.40 L0.20 3.60 L0.75 3.85 Z M0.20 8.00 L0.20 6.00 L1.84 4.36 L3.20 5.00 Z M0.20 9.60 L4.29 5.51 L5.66 6.14 L0.75 11.05 L0.20 10.80 Z M6.00 7.40 L6.00 9.40 L3.20 12.20 L1.84 11.56 Z M6.00 11.00 L6.00 13.00 L5.66 13.34 L4.29 12.71 Z" fill="#d8d8d8"/><path d="M6.8 6.3 L12.4 3.6 V10.8 L6.8 13.5 Z" fill="#7fd4f9"/></svg>
<svg style="left:757.5px;top:235.5px" width="7" height="4"><path d="M0 0 H7 L3.5 3.6 Z" fill="#c4c4c4"/></svg>
<svg style="left:737.5px;top:275px" width="9" height="7" viewBox="0 0 9 7"><path d="M0 0 H9 L4.5 7 Z" fill="#6c6c6c"/></svg>
<svg style="left:753px;top:271.5px" width="13" height="12" viewBox="0 0 13 12"><path d="M6.5 1 V6.5" stroke="#9bd23c" stroke-width="1.8" stroke-linecap="round"/><path d="M6.5 6.5 L1.5 9.8" stroke="#3fa9f5" stroke-width="1.8" stroke-linecap="round"/><path d="M6.5 6.5 L11.5 9.8" stroke="#f05a28" stroke-width="1.8" stroke-linecap="round"/></svg>
<div class="t b" style="left:750.3px;top:294.5px;">Position</div>
<div class="t b" style="left:750.3px;top:314.6px;">Rotation</div>
<div class="t " style="left:750.3px;top:334.6px;">Scale</div>
<svg style="left:737px;top:369px" width="9" height="7" viewBox="0 0 9 7"><path d="M0 0 H9 L4.5 7 Z" fill="#6c6c6c"/></svg>
<svg style="left:752.5px;top:364px" width="13" height="14" viewBox="0 0 13 14"><path d="M1 1.5 Q5 1.5 6 5.5 Q7 2.5 12 4.5" fill="none" stroke="#e8e8e8" stroke-width="1.5"/><path d="M9.5 2 L12 4.5 L9 6.5" fill="none" stroke="#e8e8e8" stroke-width="1.5"/><path d="M6 5.5 Q5.5 9 2.5 12.5" fill="none" stroke="#3ad0d0" stroke-width="1.6"/></svg>
<div class="t b" style="left:750.4px;top:387.5px;">Content</div>
<div class="t " style="left:750.4px;top:407.7px;">Avatar</div>
<div class="t " style="left:750.4px;top:428px;">Apply</div>
<div class="t " style="left:750.4px;top:447px;">Update</div>
<svg style="left:662px;top:122px" width="54" height="54" viewBox="0 0 54 54" shape-rendering="crispEdges"><rect x="26" y="14" width="1" height="1" fill="#8a7040"/><rect x="27" y="14" width="1" height="1" fill="#6a5a38"/><rect x="30" y="14" width="1" height="1" fill="#6a5a38"/><rect x="31" y="14" width="1" height="1" fill="#8a7040"/><rect x="32" y="14" width="1" height="1" fill="#6a5a38"/><rect x="24" y="15" width="1" height="1" fill="#3a3a2a"/><rect x="25" y="15" width="1" height="1" fill="#3a3a2a"/><rect x="26" y="15" width="1" height="1" fill="#6a5a38"/><rect x="28" y="15" width="1" height="1" fill="#6a5a38"/><rect x="29" y="15" width="1" height="1" fill="#4e5a3e"/><rect x="30" y="15" width="1" height="1" fill="#4e5a3e"/><rect x="31" y="15" width="1" height="1" fill="#8a7040"/><rect x="32" y="15" width="1" height="1" fill="#3a3a2a"/><rect x="34" y="15" width="1" height="1" fill="#6a5a38"/><rect x="23" y="16" width="1" height="1" fill="#6a5a38"/><rect x="24" y="16" width="1" height="1" fill="#3a3a2a"/><rect x="25" y="16" width="1" height="1" fill="#4e5a3e"/><rect x="26" y="16" width="1" height="1" fill="#6a5a38"/><rect x="30" y="16" width="1" height="1" fill="#8a7040"/><rect x="31" y="16" width="1" height="1" fill="#8a7040"/><rect x="32" y="16" width="1" height="1" fill="#8a7040"/><rect x="34" y="16" width="1" height="1" fill="#3a3a2a"/><rect x="35" y="16" width="1" height="1" fill="#3a3a2a"/><rect x="23" y="17" width="1" height="1" fill="#4e5a3e"/><rect x="25" y="17" width="1" height="1" fill="#6a5a38"/><rect x="27" y="17" width="1" height="1" fill="#3a3a2a"/><rect x="28" y="17" width="1" height="1" fill="#8a7040"/><rect x="29" y="17" width="1" height="1" fill="#6a5a38"/><rect x="30" y="17" width="1" height="1" fill="#4e5a3e"/><rect x="31" y="17" width="1" height="1" fill="#4e5a3e"/><rect x="32" y="17" width="1" height="1" fill="#6a5a38"/><rect x="33" y="17" width="1" height="1" fill="#6a5a38"/><rect x="34" y="17" width="1" height="1" fill="#6a5a38"/><rect x="35" y="17" width="1" height="1" fill="#3a3a2a"/><rect x="23" y="18" width="1" height="1" fill="#8a7040"/><rect x="24" y="18" width="1" height="1" fill="#3a3a2a"/><rect x="26" y="18" width="1" height="1" fill="#4e5a3e"/><rect x="28" y="18" width="1" height="1" fill="#3a3a2a"/><rect x="31" y="18" width="1" height="1" fill="#6a5a38"/><rect x="32" y="18" width="1" height="1" fill="#6a5a38"/><rect x="33" y="18" width="1" height="1" fill="#3a3a2a"/><rect x="34" y="18" width="1" height="1" fill="#8a7040"/><rect x="35" y="18" width="1" height="1" fill="#3a3a2a"/><rect x="23" y="19" width="1" height="1" fill="#8a7040"/><rect x="25" y="19" width="1" height="1" fill="#6a5a38"/><rect x="27" y="19" width="1" height="1" fill="#3a3a2a"/><rect x="28" y="19" width="1" height="1" fill="#3a3a2a"/><rect x="31" y="19" width="1" height="1" fill="#6a5a38"/><rect x="32" y="19" width="1" height="1" fill="#6a5a38"/><rect x="33" y="19" width="1" height="1" fill="#4e5a3e"/><rect x="34" y="19" width="1" height="1" fill="#4e5a3e"/><rect x="24" y="20" width="1" height="1" fill="#5a5e40"/><rect x="25" y="20" width="1" height="1" fill="#4e5a3e"/><rect x="27" y="20" width="1" height="1" fill="#5a5e40"/><rect x="28" y="20" width="1" height="1" fill="#9a7840"/><rect x="30" y="20" width="1" height="1" fill="#4e5a3e"/><rect x="31" y="20" width="1" height="1" fill="#5a5e40"/><rect x="33" y="20" width="1" height="1" fill="#8a6a3a"/><rect x="23" y="21" width="1" height="1" fill="#9a7840"/><rect x="24" y="21" width="1" height="1" fill="#5e5030"/><rect x="25" y="21" width="1" height="1" fill="#434a34"/><rect x="26" y="21" width="1" height="1" fill="#434a34"/><rect x="27" y="21" width="1" height="1" fill="#7a6034"/><rect x="29" y="21" width="1" height="1" fill="#55603f"/><rect x="30" y="21" width="1" height="1" fill="#4e5a3e"/><rect x="31" y="21" width="1" height="1" fill="#9a7840"/><rect x="32" y="21" width="1" height="1" fill="#7a6034"/><rect x="33" y="21" width="1" height="1" fill="#7a6034"/><rect x="34" y="21" width="1" height="1" fill="#4e5a3e"/><rect x="22" y="22" width="1" height="1" fill="#434a34"/><rect x="23" y="22" width="1" height="1" fill="#5e5030"/><rect x="24" y="22" width="1" height="1" fill="#5a5e40"/><rect x="25" y="22" width="1" height="1" fill="#5e5030"/><rect x="26" y="22" width="1" height="1" fill="#55603f"/><rect x="27" y="22" width="1" height="1" fill="#7a6034"/><rect x="28" y="22" width="1" height="1" fill="#55603f"/><rect x="29" y="22" width="1" height="1" fill="#5e5030"/><rect x="30" y="22" width="1" height="1" fill="#55603f"/><rect x="31" y="22" width="1" height="1" fill="#48523a"/><rect x="32" y="22" width="1" height="1" fill="#5a5e40"/><rect x="33" y="22" width="1" height="1" fill="#5a5e40"/><rect x="34" y="22" width="1" height="1" fill="#8a6a3a"/><rect x="35" y="22" width="1" height="1" fill="#434a34"/><rect x="21" y="23" width="1" height="1" fill="#5e5030"/><rect x="22" y="23" width="1" height="1" fill="#4e5a3e"/><rect x="23" y="23" width="1" height="1" fill="#4e5a3e"/><rect x="24" y="23" width="1" height="1" fill="#48523a"/><rect x="25" y="23" width="1" height="1" fill="#8a6a3a"/><rect x="26" y="23" width="1" height="1" fill="#5e5030"/><rect x="27" y="23" width="1" height="1" fill="#55603f"/><rect x="28" y="23" width="1" height="1" fill="#9a7840"/><rect x="29" y="23" width="1" height="1" fill="#48523a"/><rect x="30" y="23" width="1" height="1" fill="#434a34"/><rect x="31" y="23" width="1" height="1" fill="#4e5a3e"/><rect x="32" y="23" width="1" height="1" fill="#55603f"/><rect x="33" y="23" width="1" height="1" fill="#7a6034"/><rect x="34" y="23" width="1" height="1" fill="#4e5a3e"/><rect x="35" y="23" width="1" height="1" fill="#5e5030"/><rect x="36" y="23" width="1" height="1" fill="#48523a"/><rect x="20" y="24" width="1" height="1" fill="#5e5030"/><rect x="21" y="24" width="1" height="1" fill="#8a6a3a"/><rect x="23" y="24" width="1" height="1" fill="#5e5030"/><rect x="24" y="24" width="1" height="1" fill="#55603f"/><rect x="25" y="24" width="1" height="1" fill="#55603f"/><rect x="27" y="24" width="1" height="1" fill="#3a3f2c"/><rect x="28" y="24" width="1" height="1" fill="#434a34"/><rect x="29" y="24" width="1" height="1" fill="#4e5a3e"/><rect x="30" y="24" width="1" height="1" fill="#5a5e40"/><rect x="31" y="24" width="1" height="1" fill="#434a34"/><rect x="32" y="24" width="1" height="1" fill="#8a6a3a"/><rect x="33" y="24" width="1" height="1" fill="#55603f"/><rect x="34" y="24" width="1" height="1" fill="#4e5a3e"/><rect x="35" y="24" width="1" height="1" fill="#3a3f2c"/><rect x="36" y="24" width="1" height="1" fill="#5a5e40"/><rect x="37" y="24" width="1" height="1" fill="#9a7840"/><rect x="19" y="25" width="1" height="1" fill="#48523a"/><rect x="20" y="25" width="1" height="1" fill="#4e5a3e"/><rect x="22" y="25" width="1" height="1" fill="#48523a"/><rect x="24" y="25" width="1" height="1" fill="#55603f"/><rect x="25" y="25" width="1" height="1" fill="#3a3f2c"/><rect x="26" y="25" width="1" height="1" fill="#434a34"/><rect x="27" y="25" width="1" height="1" fill="#4e5a3e"/><rect x="28" y="25" width="1" height="1" fill="#55603f"/><rect x="30" y="25" width="1" height="1" fill="#55603f"/><rect x="31" y="25" width="1" height="1" fill="#55603f"/><rect x="32" y="25" width="1" height="1" fill="#434a34"/><rect x="33" y="25" width="1" height="1" fill="#5a5e40"/><rect x="35" y="25" width="1" height="1" fill="#434a34"/><rect x="36" y="25" width="1" height="1" fill="#434a34"/><rect x="37" y="25" width="1" height="1" fill="#434a34"/><rect x="38" y="25" width="1" height="1" fill="#4e5a3e"/><rect x="20" y="26" width="1" height="1" fill="#5e5030"/><rect x="21" y="26" width="1" height="1" fill="#5a5e40"/><rect x="22" y="26" width="1" height="1" fill="#434a34"/><rect x="23" y="26" width="1" height="1" fill="#4e5a3e"/><rect x="24" y="26" width="1" height="1" fill="#7a6034"/><rect x="25" y="26" width="1" height="1" fill="#3a3f2c"/><rect x="26" y="26" width="1" height="1" fill="#4e5a3e"/><rect x="27" y="26" width="1" height="1" fill="#55603f"/><rect x="28" y="26" width="1" height="1" fill="#5a5e40"/><rect x="29" y="26" width="1" height="1" fill="#5a5e40"/><rect x="30" y="26" width="1" height="1" fill="#4e5a3e"/><rect x="31" y="26" width="1" height="1" fill="#4e5a3e"/><rect x="32" y="26" width="1" height="1" fill="#48523a"/><rect x="33" y="26" width="1" height="1" fill="#9a7840"/><rect x="34" y="26" width="1" height="1" fill="#4e5a3e"/><rect x="35" y="26" width="1" height="1" fill="#48523a"/><rect x="36" y="26" width="1" height="1" fill="#9a7840"/><rect x="37" y="26" width="1" height="1" fill="#8a6a3a"/><rect x="18" y="27" width="1" height="1" fill="#434a34"/><rect x="19" y="27" width="1" height="1" fill="#48523a"/><rect x="21" y="27" width="1" height="1" fill="#5e5030"/><rect x="22" y="27" width="1" height="1" fill="#5e5030"/><rect x="23" y="27" width="1" height="1" fill="#55603f"/><rect x="25" y="27" width="1" height="1" fill="#3a3f2c"/><rect x="26" y="27" width="1" height="1" fill="#48523a"/><rect x="27" y="27" width="1" height="1" fill="#5a5e40"/><rect x="28" y="27" width="1" height="1" fill="#4e5a3e"/><rect x="29" y="27" width="1" height="1" fill="#5a5e40"/><rect x="30" y="27" width="1" height="1" fill="#4e5a3e"/><rect x="31" y="27" width="1" height="1" fill="#48523a"/><rect x="32" y="27" width="1" height="1" fill="#434a34"/><rect x="33" y="27" width="1" height="1" fill="#48523a"/><rect x="34" y="27" width="1" height="1" fill="#4e5a3e"/><rect x="35" y="27" width="1" height="1" fill="#55603f"/><rect x="36" y="27" width="1" height="1" fill="#5e5030"/><rect x="37" y="27" width="1" height="1" fill="#5a5e40"/><rect x="38" y="27" width="1" height="1" fill="#5a5e40"/><rect x="39" y="27" width="1" height="1" fill="#434a34"/><rect x="18" y="28" width="1" height="1" fill="#9a7840"/><rect x="19" y="28" width="1" height="1" fill="#48523a"/><rect x="20" y="28" width="1" height="1" fill="#434a34"/><rect x="21" y="28" width="1" height="1" fill="#48523a"/><rect x="22" y="28" width="1" height="1" fill="#5e5030"/><rect x="23" y="28" width="1" height="1" fill="#9a7840"/><rect x="24" y="28" width="1" height="1" fill="#55603f"/><rect x="25" y="28" width="1" height="1" fill="#3a3f2c"/><rect x="26" y="28" width="1" height="1" fill="#434a34"/><rect x="27" y="28" width="1" height="1" fill="#5a5e40"/><rect x="28" y="28" width="1" height="1" fill="#55603f"/><rect x="29" y="28" width="1" height="1" fill="#4e5a3e"/><rect x="30" y="28" width="1" height="1" fill="#434a34"/><rect x="31" y="28" width="1" height="1" fill="#3a3f2c"/><rect x="32" y="28" width="1" height="1" fill="#434a34"/><rect x="33" y="28" width="1" height="1" fill="#4e5a3e"/><rect x="34" y="28" width="1" height="1" fill="#48523a"/><rect x="35" y="28" width="1" height="1" fill="#55603f"/><rect x="36" y="28" width="1" height="1" fill="#5a5e40"/><rect x="37" y="28" width="1" height="1" fill="#48523a"/><rect x="38" y="28" width="1" height="1" fill="#4e5a3e"/><rect x="39" y="28" width="1" height="1" fill="#5a5e40"/><rect x="18" y="29" width="1" height="1" fill="#4e5a3e"/><rect x="19" y="29" width="1" height="1" fill="#434a34"/><rect x="20" y="29" width="1" height="1" fill="#55603f"/><rect x="21" y="29" width="1" height="1" fill="#8a6a3a"/><rect x="22" y="29" width="1" height="1" fill="#5a5e40"/><rect x="23" y="29" width="1" height="1" fill="#4e5a3e"/><rect x="24" y="29" width="1" height="1" fill="#4e5a3e"/><rect x="25" y="29" width="1" height="1" fill="#55603f"/><rect x="26" y="29" width="1" height="1" fill="#5a5e40"/><rect x="27" y="29" width="1" height="1" fill="#7a6034"/><rect x="28" y="29" width="1" height="1" fill="#55603f"/><rect x="29" y="29" width="1" height="1" fill="#434a34"/><rect x="30" y="29" width="1" height="1" fill="#5a5e40"/><rect x="31" y="29" width="1" height="1" fill="#55603f"/><rect x="32" y="29" width="1" height="1" fill="#55603f"/><rect x="33" y="29" width="1" height="1" fill="#48523a"/><rect x="34" y="29" width="1" height="1" fill="#9a7840"/><rect x="35" y="29" width="1" height="1" fill="#9a7840"/><rect x="36" y="29" width="1" height="1" fill="#7a6034"/><rect x="37" y="29" width="1" height="1" fill="#48523a"/><rect x="38" y="29" width="1" height="1" fill="#5e5030"/><rect x="39" y="29" width="1" height="1" fill="#55603f"/><rect x="18" y="30" width="1" height="1" fill="#8a6a3a"/><rect x="20" y="30" width="1" height="1" fill="#434a34"/><rect x="21" y="30" width="1" height="1" fill="#9a7840"/><rect x="22" y="30" width="1" height="1" fill="#3a3f2c"/><rect x="23" y="30" width="1" height="1" fill="#4e5a3e"/><rect x="24" y="30" width="1" height="1" fill="#55603f"/><rect x="25" y="30" width="1" height="1" fill="#55603f"/><rect x="26" y="30" width="1" height="1" fill="#48523a"/><rect x="27" y="30" width="1" height="1" fill="#55603f"/><rect x="28" y="30" width="1" height="1" fill="#434a34"/><rect x="29" y="30" width="1" height="1" fill="#3a3f2c"/><rect x="30" y="30" width="1" height="1" fill="#48523a"/><rect x="32" y="30" width="1" height="1" fill="#48523a"/><rect x="33" y="30" width="1" height="1" fill="#434a34"/><rect x="34" y="30" width="1" height="1" fill="#5e5030"/><rect x="35" y="30" width="1" height="1" fill="#5a5e40"/><rect x="36" y="30" width="1" height="1" fill="#55603f"/><rect x="37" y="30" width="1" height="1" fill="#55603f"/><rect x="18" y="31" width="1" height="1" fill="#7a6034"/><rect x="19" y="31" width="1" height="1" fill="#8a6a3a"/><rect x="20" y="31" width="1" height="1" fill="#48523a"/><rect x="22" y="31" width="1" height="1" fill="#48523a"/><rect x="23" y="31" width="1" height="1" fill="#434a34"/><rect x="25" y="31" width="1" height="1" fill="#5a5e40"/><rect x="26" y="31" width="1" height="1" fill="#5a5e40"/><rect x="27" y="31" width="1" height="1" fill="#5a5e40"/><rect x="28" y="31" width="1" height="1" fill="#4e5a3e"/><rect x="29" y="31" width="1" height="1" fill="#55603f"/><rect x="30" y="31" width="1" height="1" fill="#48523a"/><rect x="31" y="31" width="1" height="1" fill="#434a34"/><rect x="32" y="31" width="1" height="1" fill="#8a6a3a"/><rect x="33" y="31" width="1" height="1" fill="#3a3f2c"/><rect x="34" y="31" width="1" height="1" fill="#48523a"/><rect x="35" y="31" width="1" height="1" fill="#4e5a3e"/><rect x="36" y="31" width="1" height="1" fill="#7a6034"/><rect x="37" y="31" width="1" height="1" fill="#5a5e40"/><rect x="38" y="31" width="1" height="1" fill="#9a7840"/><rect x="39" y="31" width="1" height="1" fill="#434a34"/><rect x="19" y="32" width="1" height="1" fill="#4e5a3e"/><rect x="20" y="32" width="1" height="1" fill="#5e5030"/><rect x="21" y="32" width="1" height="1" fill="#48523a"/><rect x="22" y="32" width="1" height="1" fill="#8a6a3a"/><rect x="23" y="32" width="1" height="1" fill="#434a34"/><rect x="24" y="32" width="1" height="1" fill="#3a3f2c"/><rect x="25" y="32" width="1" height="1" fill="#434a34"/><rect x="26" y="32" width="1" height="1" fill="#5a5e40"/><rect x="27" y="32" width="1" height="1" fill="#9a7840"/><rect x="28" y="32" width="1" height="1" fill="#5a5e40"/><rect x="29" y="32" width="1" height="1" fill="#3a3f2c"/><rect x="30" y="32" width="1" height="1" fill="#8a6a3a"/><rect x="31" y="32" width="1" height="1" fill="#55603f"/><rect x="32" y="32" width="1" height="1" fill="#55603f"/><rect x="33" y="32" width="1" height="1" fill="#4e5a3e"/><rect x="34" y="32" width="1" height="1" fill="#434a34"/><rect x="35" y="32" width="1" height="1" fill="#3a3f2c"/><rect x="36" y="32" width="1" height="1" fill="#3a3f2c"/><rect x="37" y="32" width="1" height="1" fill="#8a6a3a"/><rect x="38" y="32" width="1" height="1" fill="#5a5e40"/><rect x="20" y="33" width="1" height="1" fill="#9a7840"/><rect x="21" y="33" width="1" height="1" fill="#7a6034"/><rect x="22" y="33" width="1" height="1" fill="#55603f"/><rect x="23" y="33" width="1" height="1" fill="#8a6a3a"/><rect x="24" y="33" width="1" height="1" fill="#5e5030"/><rect x="25" y="33" width="1" height="1" fill="#4e5a3e"/><rect x="26" y="33" width="1" height="1" fill="#48523a"/><rect x="27" y="33" width="1" height="1" fill="#3a3f2c"/><rect x="28" y="33" width="1" height="1" fill="#55603f"/><rect x="29" y="33" width="1" height="1" fill="#4e5a3e"/><rect x="30" y="33" width="1" height="1" fill="#7a6034"/><rect x="31" y="33" width="1" height="1" fill="#48523a"/><rect x="32" y="33" width="1" height="1" fill="#7a6034"/><rect x="33" y="33" width="1" height="1" fill="#9a7840"/><rect x="34" y="33" width="1" height="1" fill="#48523a"/><rect x="35" y="33" width="1" height="1" fill="#5e5030"/><rect x="36" y="33" width="1" height="1" fill="#4e5a3e"/><rect x="37" y="33" width="1" height="1" fill="#55603f"/><rect x="38" y="33" width="1" height="1" fill="#4e5a3e"/><rect x="20" y="34" width="1" height="1" fill="#4e5a3e"/><rect x="21" y="34" width="1" height="1" fill="#4e5a3e"/><rect x="22" y="34" width="1" height="1" fill="#55603f"/><rect x="23" y="34" width="1" height="1" fill="#434a34"/><rect x="24" y="34" width="1" height="1" fill="#5a5e40"/><rect x="25" y="34" width="1" height="1" fill="#9a7840"/><rect x="26" y="34" width="1" height="1" fill="#5e5030"/><rect x="28" y="34" width="1" height="1" fill="#4e5a3e"/><rect x="29" y="34" width="1" height="1" fill="#5a5e40"/><rect x="30" y="34" width="1" height="1" fill="#48523a"/><rect x="31" y="34" width="1" height="1" fill="#55603f"/><rect x="32" y="34" width="1" height="1" fill="#5a5e40"/><rect x="33" y="34" width="1" height="1" fill="#7a6034"/><rect x="34" y="34" width="1" height="1" fill="#55603f"/><rect x="35" y="34" width="1" height="1" fill="#5a5e40"/><rect x="36" y="34" width="1" height="1" fill="#5a5e40"/><rect x="37" y="34" width="1" height="1" fill="#9a7840"/><rect x="21" y="35" width="1" height="1" fill="#434a34"/><rect x="24" y="35" width="1" height="1" fill="#5a5e40"/><rect x="25" y="35" width="1" height="1" fill="#4e5a3e"/><rect x="26" y="35" width="1" height="1" fill="#4e5a3e"/><rect x="27" y="35" width="1" height="1" fill="#5a5e40"/><rect x="28" y="35" width="1" height="1" fill="#55603f"/><rect x="29" y="35" width="1" height="1" fill="#55603f"/><rect x="30" y="35" width="1" height="1" fill="#48523a"/><rect x="31" y="35" width="1" height="1" fill="#48523a"/><rect x="32" y="35" width="1" height="1" fill="#48523a"/><rect x="33" y="35" width="1" height="1" fill="#55603f"/><rect x="34" y="35" width="1" height="1" fill="#55603f"/><rect x="35" y="35" width="1" height="1" fill="#8a6a3a"/><rect x="36" y="35" width="1" height="1" fill="#48523a"/><rect x="22" y="36" width="1" height="1" fill="#55603f"/><rect x="23" y="36" width="1" height="1" fill="#7a6034"/><rect x="24" y="36" width="1" height="1" fill="#5a5e40"/><rect x="25" y="36" width="1" height="1" fill="#4e5a3e"/><rect x="26" y="36" width="1" height="1" fill="#5a5e40"/><rect x="27" y="36" width="1" height="1" fill="#5a5e40"/><rect x="28" y="36" width="1" height="1" fill="#48523a"/><rect x="29" y="36" width="1" height="1" fill="#8a6a3a"/><rect x="30" y="36" width="1" height="1" fill="#4e5a3e"/><rect x="31" y="36" width="1" height="1" fill="#48523a"/><rect x="32" y="36" width="1" height="1" fill="#434a34"/><rect x="33" y="36" width="1" height="1" fill="#4e5a3e"/><rect x="34" y="36" width="1" height="1" fill="#5e5030"/><rect x="35" y="36" width="1" height="1" fill="#434a34"/><rect x="23" y="37" width="1" height="1" fill="#9a7840"/><rect x="26" y="37" width="1" height="1" fill="#8a6a3a"/><rect x="27" y="37" width="1" height="1" fill="#8a6a3a"/><rect x="28" y="37" width="1" height="1" fill="#5a5e40"/><rect x="29" y="37" width="1" height="1" fill="#3a3f2c"/><rect x="31" y="37" width="1" height="1" fill="#48523a"/><rect x="33" y="37" width="1" height="1" fill="#48523a"/><rect x="34" y="37" width="1" height="1" fill="#434a34"/><rect x="26" y="38" width="1" height="1" fill="#55603f"/><rect x="28" y="38" width="1" height="1" fill="#8a6a3a"/><rect x="30" y="38" width="1" height="1" fill="#55603f"/><rect x="31" y="38" width="1" height="1" fill="#9a7840"/><rect x="26" y="39" width="1" height="1" fill="#3a2e20"/><rect x="27" y="39" width="1" height="1" fill="#4a3a28"/><rect x="28" y="39" width="1" height="1" fill="#a08050"/><rect x="29" y="39" width="1" height="1" fill="#4a3a28"/><rect x="30" y="39" width="1" height="1" fill="#a08050"/><rect x="31" y="39" width="1" height="1" fill="#a08050"/><rect x="26" y="40" width="1" height="1" fill="#a08050"/><rect x="27" y="40" width="1" height="1" fill="#4a3a28"/><rect x="28" y="40" width="1" height="1" fill="#4a3a28"/><rect x="29" y="40" width="1" height="1" fill="#3a2e20"/><rect x="30" y="40" width="1" height="1" fill="#3a2e20"/><rect x="31" y="40" width="1" height="1" fill="#a08050"/><rect x="26" y="41" width="1" height="1" fill="#3a2e20"/><rect x="27" y="41" width="1" height="1" fill="#6a5030"/><rect x="28" y="41" width="1" height="1" fill="#4a3a28"/><rect x="29" y="41" width="1" height="1" fill="#6a5030"/><rect x="30" y="41" width="1" height="1" fill="#6a5030"/><rect x="31" y="41" width="1" height="1" fill="#3a2e20"/><rect x="26" y="42" width="1" height="1" fill="#a08050"/><rect x="27" y="42" width="1" height="1" fill="#6a5030"/><rect x="28" y="42" width="1" height="1" fill="#a08050"/><rect x="29" y="42" width="1" height="1" fill="#4a3a28"/><rect x="30" y="42" width="1" height="1" fill="#a08050"/><rect x="31" y="42" width="1" height="1" fill="#6a5030"/><rect x="26" y="43" width="1" height="1" fill="#3a2e20"/><rect x="27" y="43" width="1" height="1" fill="#a08050"/><rect x="28" y="43" width="1" height="1" fill="#4a3a28"/><rect x="29" y="43" width="1" height="1" fill="#6a5030"/><rect x="30" y="43" width="1" height="1" fill="#4a3a28"/><rect x="31" y="43" width="1" height="1" fill="#6a5030"/><rect x="26" y="44" width="1" height="1" fill="#6a5030"/><rect x="27" y="44" width="1" height="1" fill="#4a3a28"/><rect x="28" y="44" width="1" height="1" fill="#4a3a28"/><rect x="29" y="44" width="1" height="1" fill="#4a3a28"/><rect x="30" y="44" width="1" height="1" fill="#3a2e20"/><rect x="31" y="44" width="1" height="1" fill="#4a3a28"/><circle cx="33.5" cy="24.5" r="1.1" fill="#8e2418"/><circle cx="26" cy="28" r="1.1" fill="#a06a28"/><circle cx="33" cy="28.5" r="1.1" fill="#962a18"/><circle cx="38" cy="28" r="1.1" fill="#b08030"/><circle cx="19" cy="32" r="1.1" fill="#8a2418"/><circle cx="24.5" cy="35.5" r="1.1" fill="#9a2c1a"/><circle cx="32" cy="35.5" r="1.1" fill="#9a5020"/><circle cx="27" cy="18" r="1.1" fill="#222222"/><circle cx="34" cy="10" r="1.4" fill="#2f6a2a"/><circle cx="35" cy="12.5" r="1.2" fill="#3b7a30"/><circle cx="32" cy="10.5" r="0.9" fill="#7a1c10"/><circle cx="25" cy="8.5" r="0.7" fill="#a07a40"/></svg>
<svg style="left:662px;top:209px" width="54" height="54" viewBox="0 0 54 54" shape-rendering="crispEdges"><rect x="26" y="14" width="1" height="1" fill="#8a7040"/><rect x="27" y="14" width="1" height="1" fill="#6a5a38"/><rect x="30" y="14" width="1" height="1" fill="#6a5a38"/><rect x="31" y="14" width="1" height="1" fill="#8a7040"/><rect x="32" y="14" width="1" height="1" fill="#6a5a38"/><rect x="24" y="15" width="1" height="1" fill="#3a3a2a"/><rect x="25" y="15" width="1" height="1" fill="#3a3a2a"/><rect x="26" y="15" width="1" height="1" fill="#6a5a38"/><rect x="28" y="15" width="1" height="1" fill="#6a5a38"/><rect x="29" y="15" width="1" height="1" fill="#4e5a3e"/><rect x="30" y="15" width="1" height="1" fill="#4e5a3e"/><rect x="31" y="15" width="1" height="1" fill="#8a7040"/><rect x="32" y="15" width="1" height="1" fill="#3a3a2a"/><rect x="34" y="15" width="1" height="1" fill="#6a5a38"/><rect x="23" y="16" width="1" height="1" fill="#6a5a38"/><rect x="24" y="16" width="1" height="1" fill="#3a3a2a"/><rect x="25" y="16" width="1" height="1" fill="#4e5a3e"/><rect x="26" y="16" width="1" height="1" fill="#6a5a38"/><rect x="30" y="16" width="1" height="1" fill="#8a7040"/><rect x="31" y="16" width="1" height="1" fill="#8a7040"/><rect x="32" y="16" width="1" height="1" fill="#8a7040"/><rect x="34" y="16" width="1" height="1" fill="#3a3a2a"/><rect x="35" y="16" width="1" height="1" fill="#3a3a2a"/><rect x="23" y="17" width="1" height="1" fill="#4e5a3e"/><rect x="25" y="17" width="1" height="1" fill="#6a5a38"/><rect x="27" y="17" width="1" height="1" fill="#3a3a2a"/><rect x="28" y="17" width="1" height="1" fill="#8a7040"/><rect x="29" y="17" width="1" height="1" fill="#6a5a38"/><rect x="30" y="17" width="1" height="1" fill="#4e5a3e"/><rect x="31" y="17" width="1" height="1" fill="#4e5a3e"/><rect x="32" y="17" width="1" height="1" fill="#6a5a38"/><rect x="33" y="17" width="1" height="1" fill="#6a5a38"/><rect x="34" y="17" width="1" height="1" fill="#6a5a38"/><rect x="35" y="17" width="1" height="1" fill="#3a3a2a"/><rect x="23" y="18" width="1" height="1" fill="#8a7040"/><rect x="24" y="18" width="1" height="1" fill="#3a3a2a"/><rect x="26" y="18" width="1" height="1" fill="#4e5a3e"/><rect x="28" y="18" width="1" height="1" fill="#3a3a2a"/><rect x="31" y="18" width="1" height="1" fill="#6a5a38"/><rect x="32" y="18" width="1" height="1" fill="#6a5a38"/><rect x="33" y="18" width="1" height="1" fill="#3a3a2a"/><rect x="34" y="18" width="1" height="1" fill="#8a7040"/><rect x="35" y="18" width="1" height="1" fill="#3a3a2a"/><rect x="23" y="19" width="1" height="1" fill="#8a7040"/><rect x="25" y="19" width="1" height="1" fill="#6a5a38"/><rect x="27" y="19" width="1" height="1" fill="#3a3a2a"/><rect x="28" y="19" width="1" height="1" fill="#3a3a2a"/><rect x="31" y="19" width="1" height="1" fill="#6a5a38"/><rect x="32" y="19" width="1" height="1" fill="#6a5a38"/><rect x="33" y="19" width="1" height="1" fill="#4e5a3e"/><rect x="34" y="19" width="1" height="1" fill="#4e5a3e"/><rect x="24" y="20" width="1" height="1" fill="#5a5e40"/><rect x="25" y="20" width="1" height="1" fill="#4e5a3e"/><rect x="27" y="20" width="1" height="1" fill="#5a5e40"/><rect x="28" y="20" width="1" height="1" fill="#9a7840"/><rect x="30" y="20" width="1" height="1" fill="#4e5a3e"/><rect x="31" y="20" width="1" height="1" fill="#5a5e40"/><rect x="33" y="20" width="1" height="1" fill="#8a6a3a"/><rect x="23" y="21" width="1" height="1" fill="#9a7840"/><rect x="24" y="21" width="1" height="1" fill="#5e5030"/><rect x="25" y="21" width="1" height="1" fill="#434a34"/><rect x="26" y="21" width="1" height="1" fill="#434a34"/><rect x="27" y="21" width="1" height="1" fill="#7a6034"/><rect x="29" y="21" width="1" height="1" fill="#55603f"/><rect x="30" y="21" width="1" height="1" fill="#4e5a3e"/><rect x="31" y="21" width="1" height="1" fill="#9a7840"/><rect x="32" y="21" width="1" height="1" fill="#7a6034"/><rect x="33" y="21" width="1" height="1" fill="#7a6034"/><rect x="34" y="21" width="1" height="1" fill="#4e5a3e"/><rect x="22" y="22" width="1" height="1" fill="#434a34"/><rect x="23" y="22" width="1" height="1" fill="#5e5030"/><rect x="24" y="22" width="1" height="1" fill="#5a5e40"/><rect x="25" y="22" width="1" height="1" fill="#5e5030"/><rect x="26" y="22" width="1" height="1" fill="#55603f"/><rect x="27" y="22" width="1" height="1" fill="#7a6034"/><rect x="28" y="22" width="1" height="1" fill="#55603f"/><rect x="29" y="22" width="1" height="1" fill="#5e5030"/><rect x="30" y="22" width="1" height="1" fill="#55603f"/><rect x="31" y="22" width="1" height="1" fill="#48523a"/><rect x="32" y="22" width="1" height="1" fill="#5a5e40"/><rect x="33" y="22" width="1" height="1" fill="#5a5e40"/><rect x="34" y="22" width="1" height="1" fill="#8a6a3a"/><rect x="35" y="22" width="1" height="1" fill="#434a34"/><rect x="21" y="23" width="1" height="1" fill="#5e5030"/><rect x="22" y="23" width="1" height="1" fill="#4e5a3e"/><rect x="23" y="23" width="1" height="1" fill="#4e5a3e"/><rect x="24" y="23" width="1" height="1" fill="#48523a"/><rect x="25" y="23" width="1" height="1" fill="#8a6a3a"/><rect x="26" y="23" width="1" height="1" fill="#5e5030"/><rect x="27" y="23" width="1" height="1" fill="#55603f"/><rect x="28" y="23" width="1" height="1" fill="#9a7840"/><rect x="29" y="23" width="1" height="1" fill="#48523a"/><rect x="30" y="23" width="1" height="1" fill="#434a34"/><rect x="31" y="23" width="1" height="1" fill="#4e5a3e"/><rect x="32" y="23" width="1" height="1" fill="#55603f"/><rect x="33" y="23" width="1" height="1" fill="#7a6034"/><rect x="34" y="23" width="1" height="1" fill="#4e5a3e"/><rect x="35" y="23" width="1" height="1" fill="#5e5030"/><rect x="36" y="23" width="1" height="1" fill="#48523a"/><rect x="20" y="24" width="1" height="1" fill="#5e5030"/><rect x="21" y="24" width="1" height="1" fill="#8a6a3a"/><rect x="23" y="24" width="1" height="1" fill="#5e5030"/><rect x="24" y="24" width="1" height="1" fill="#55603f"/><rect x="25" y="24" width="1" height="1" fill="#55603f"/><rect x="27" y="24" width="1" height="1" fill="#3a3f2c"/><rect x="28" y="24" width="1" height="1" fill="#434a34"/><rect x="29" y="24" width="1" height="1" fill="#4e5a3e"/><rect x="30" y="24" width="1" height="1" fill="#5a5e40"/><rect x="31" y="24" width="1" height="1" fill="#434a34"/><rect x="32" y="24" width="1" height="1" fill="#8a6a3a"/><rect x="33" y="24" width="1" height="1" fill="#55603f"/><rect x="34" y="24" width="1" height="1" fill="#4e5a3e"/><rect x="35" y="24" width="1" height="1" fill="#3a3f2c"/><rect x="36" y="24" width="1" height="1" fill="#5a5e40"/><rect x="37" y="24" width="1" height="1" fill="#9a7840"/><rect x="19" y="25" width="1" height="1" fill="#48523a"/><rect x="20" y="25" width="1" height="1" fill="#4e5a3e"/><rect x="22" y="25" width="1" height="1" fill="#48523a"/><rect x="24" y="25" width="1" height="1" fill="#55603f"/><rect x="25" y="25" width="1" height="1" fill="#3a3f2c"/><rect x="26" y="25" width="1" height="1" fill="#434a34"/><rect x="27" y="25" width="1" height="1" fill="#4e5a3e"/><rect x="28" y="25" width="1" height="1" fill="#55603f"/><rect x="30" y="25" width="1" height="1" fill="#55603f"/><rect x="31" y="25" width="1" height="1" fill="#55603f"/><rect x="32" y="25" width="1" height="1" fill="#434a34"/><rect x="33" y="25" width="1" height="1" fill="#5a5e40"/><rect x="35" y="25" width="1" height="1" fill="#434a34"/><rect x="36" y="25" width="1" height="1" fill="#434a34"/><rect x="37" y="25" width="1" height="1" fill="#434a34"/><rect x="38" y="25" width="1" height="1" fill="#4e5a3e"/><rect x="20" y="26" width="1" height="1" fill="#5e5030"/><rect x="21" y="26" width="1" height="1" fill="#5a5e40"/><rect x="22" y="26" width="1" height="1" fill="#434a34"/><rect x="23" y="26" width="1" height="1" fill="#4e5a3e"/><rect x="24" y="26" width="1" height="1" fill="#7a6034"/><rect x="25" y="26" width="1" height="1" fill="#3a3f2c"/><rect x="26" y="26" width="1" height="1" fill="#4e5a3e"/><rect x="27" y="26" width="1" height="1" fill="#55603f"/><rect x="28" y="26" width="1" height="1" fill="#5a5e40"/><rect x="29" y="26" width="1" height="1" fill="#5a5e40"/><rect x="30" y="26" width="1" height="1" fill="#4e5a3e"/><rect x="31" y="26" width="1" height="1" fill="#4e5a3e"/><rect x="32" y="26" width="1" height="1" fill="#48523a"/><rect x="33" y="26" width="1" height="1" fill="#9a7840"/><rect x="34" y="26" width="1" height="1" fill="#4e5a3e"/><rect x="35" y="26" width="1" height="1" fill="#48523a"/><rect x="36" y="26" width="1" height="1" fill="#9a7840"/><rect x="37" y="26" width="1" height="1" fill="#8a6a3a"/><rect x="18" y="27" width="1" height="1" fill="#434a34"/><rect x="19" y="27" width="1" height="1" fill="#48523a"/><rect x="21" y="27" width="1" height="1" fill="#5e5030"/><rect x="22" y="27" width="1" height="1" fill="#5e5030"/><rect x="23" y="27" width="1" height="1" fill="#55603f"/><rect x="25" y="27" width="1" height="1" fill="#3a3f2c"/><rect x="26" y="27" width="1" height="1" fill="#48523a"/><rect x="27" y="27" width="1" height="1" fill="#5a5e40"/><rect x="28" y="27" width="1" height="1" fill="#4e5a3e"/><rect x="29" y="27" width="1" height="1" fill="#5a5e40"/><rect x="30" y="27" width="1" height="1" fill="#4e5a3e"/><rect x="31" y="27" width="1" height="1" fill="#48523a"/><rect x="32" y="27" width="1" height="1" fill="#434a34"/><rect x="33" y="27" width="1" height="1" fill="#48523a"/><rect x="34" y="27" width="1" height="1" fill="#4e5a3e"/><rect x="35" y="27" width="1" height="1" fill="#55603f"/><rect x="36" y="27" width="1" height="1" fill="#5e5030"/><rect x="37" y="27" width="1" height="1" fill="#5a5e40"/><rect x="38" y="27" width="1" height="1" fill="#5a5e40"/><rect x="39" y="27" width="1" height="1" fill="#434a34"/><rect x="18" y="28" width="1" height="1" fill="#9a7840"/><rect x="19" y="28" width="1" height="1" fill="#48523a"/><rect x="20" y="28" width="1" height="1" fill="#434a34"/><rect x="21" y="28" width="1" height="1" fill="#48523a"/><rect x="22" y="28" width="1" height="1" fill="#5e5030"/><rect x="23" y="28" width="1" height="1" fill="#9a7840"/><rect x="24" y="28" width="1" height="1" fill="#55603f"/><rect x="25" y="28" width="1" height="1" fill="#3a3f2c"/><rect x="26" y="28" width="1" height="1" fill="#434a34"/><rect x="27" y="28" width="1" height="1" fill="#5a5e40"/><rect x="28" y="28" width="1" height="1" fill="#55603f"/><rect x="29" y="28" width="1" height="1" fill="#4e5a3e"/><rect x="30" y="28" width="1" height="1" fill="#434a34"/><rect x="31" y="28" width="1" height="1" fill="#3a3f2c"/><rect x="32" y="28" width="1" height="1" fill="#434a34"/><rect x="33" y="28" width="1" height="1" fill="#4e5a3e"/><rect x="34" y="28" width="1" height="1" fill="#48523a"/><rect x="35" y="28" width="1" height="1" fill="#55603f"/><rect x="36" y="28" width="1" height="1" fill="#5a5e40"/><rect x="37" y="28" width="1" height="1" fill="#48523a"/><rect x="38" y="28" width="1" height="1" fill="#4e5a3e"/><rect x="39" y="28" width="1" height="1" fill="#5a5e40"/><rect x="18" y="29" width="1" height="1" fill="#4e5a3e"/><rect x="19" y="29" width="1" height="1" fill="#434a34"/><rect x="20" y="29" width="1" height="1" fill="#55603f"/><rect x="21" y="29" width="1" height="1" fill="#8a6a3a"/><rect x="22" y="29" width="1" height="1" fill="#5a5e40"/><rect x="23" y="29" width="1" height="1" fill="#4e5a3e"/><rect x="24" y="29" width="1" height="1" fill="#4e5a3e"/><rect x="25" y="29" width="1" height="1" fill="#55603f"/><rect x="26" y="29" width="1" height="1" fill="#5a5e40"/><rect x="27" y="29" width="1" height="1" fill="#7a6034"/><rect x="28" y="29" width="1" height="1" fill="#55603f"/><rect x="29" y="29" width="1" height="1" fill="#434a34"/><rect x="30" y="29" width="1" height="1" fill="#5a5e40"/><rect x="31" y="29" width="1" height="1" fill="#55603f"/><rect x="32" y="29" width="1" height="1" fill="#55603f"/><rect x="33" y="29" width="1" height="1" fill="#48523a"/><rect x="34" y="29" width="1" height="1" fill="#9a7840"/><rect x="35" y="29" width="1" height="1" fill="#9a7840"/><rect x="36" y="29" width="1" height="1" fill="#7a6034"/><rect x="37" y="29" width="1" height="1" fill="#48523a"/><rect x="38" y="29" width="1" height="1" fill="#5e5030"/><rect x="39" y="29" width="1" height="1" fill="#55603f"/><rect x="18" y="30" width="1" height="1" fill="#8a6a3a"/><rect x="20" y="30" width="1" height="1" fill="#434a34"/><rect x="21" y="30" width="1" height="1" fill="#9a7840"/><rect x="22" y="30" width="1" height="1" fill="#3a3f2c"/><rect x="23" y="30" width="1" height="1" fill="#4e5a3e"/><rect x="24" y="30" width="1" height="1" fill="#55603f"/><rect x="25" y="30" width="1" height="1" fill="#55603f"/><rect x="26" y="30" width="1" height="1" fill="#48523a"/><rect x="27" y="30" width="1" height="1" fill="#55603f"/><rect x="28" y="30" width="1" height="1" fill="#434a34"/><rect x="29" y="30" width="1" height="1" fill="#3a3f2c"/><rect x="30" y="30" width="1" height="1" fill="#48523a"/><rect x="32" y="30" width="1" height="1" fill="#48523a"/><rect x="33" y="30" width="1" height="1" fill="#434a34"/><rect x="34" y="30" width="1" height="1" fill="#5e5030"/><rect x="35" y="30" width="1" height="1" fill="#5a5e40"/><rect x="36" y="30" width="1" height="1" fill="#55603f"/><rect x="37" y="30" width="1" height="1" fill="#55603f"/><rect x="18" y="31" width="1" height="1" fill="#7a6034"/><rect x="19" y="31" width="1" height="1" fill="#8a6a3a"/><rect x="20" y="31" width="1" height="1" fill="#48523a"/><rect x="22" y="31" width="1" height="1" fill="#48523a"/><rect x="23" y="31" width="1" height="1" fill="#434a34"/><rect x="25" y="31" width="1" height="1" fill="#5a5e40"/><rect x="26" y="31" width="1" height="1" fill="#5a5e40"/><rect x="27" y="31" width="1" height="1" fill="#5a5e40"/><rect x="28" y="31" width="1" height="1" fill="#4e5a3e"/><rect x="29" y="31" width="1" height="1" fill="#55603f"/><rect x="30" y="31" width="1" height="1" fill="#48523a"/><rect x="31" y="31" width="1" height="1" fill="#434a34"/><rect x="32" y="31" width="1" height="1" fill="#8a6a3a"/><rect x="33" y="31" width="1" height="1" fill="#3a3f2c"/><rect x="34" y="31" width="1" height="1" fill="#48523a"/><rect x="35" y="31" width="1" height="1" fill="#4e5a3e"/><rect x="36" y="31" width="1" height="1" fill="#7a6034"/><rect x="37" y="31" width="1" height="1" fill="#5a5e40"/><rect x="38" y="31" width="1" height="1" fill="#9a7840"/><rect x="39" y="31" width="1" height="1" fill="#434a34"/><rect x="19" y="32" width="1" height="1" fill="#4e5a3e"/><rect x="20" y="32" width="1" height="1" fill="#5e5030"/><rect x="21" y="32" width="1" height="1" fill="#48523a"/><rect x="22" y="32" width="1" height="1" fill="#8a6a3a"/><rect x="23" y="32" width="1" height="1" fill="#434a34"/><rect x="24" y="32" width="1" height="1" fill="#3a3f2c"/><rect x="25" y="32" width="1" height="1" fill="#434a34"/><rect x="26" y="32" width="1" height="1" fill="#5a5e40"/><rect x="27" y="32" width="1" height="1" fill="#9a7840"/><rect x="28" y="32" width="1" height="1" fill="#5a5e40"/><rect x="29" y="32" width="1" height="1" fill="#3a3f2c"/><rect x="30" y="32" width="1" height="1" fill="#8a6a3a"/><rect x="31" y="32" width="1" height="1" fill="#55603f"/><rect x="32" y="32" width="1" height="1" fill="#55603f"/><rect x="33" y="32" width="1" height="1" fill="#4e5a3e"/><rect x="34" y="32" width="1" height="1" fill="#434a34"/><rect x="35" y="32" width="1" height="1" fill="#3a3f2c"/><rect x="36" y="32" width="1" height="1" fill="#3a3f2c"/><rect x="37" y="32" width="1" height="1" fill="#8a6a3a"/><rect x="38" y="32" width="1" height="1" fill="#5a5e40"/><rect x="20" y="33" width="1" height="1" fill="#9a7840"/><rect x="21" y="33" width="1" height="1" fill="#7a6034"/><rect x="22" y="33" width="1" height="1" fill="#55603f"/><rect x="23" y="33" width="1" height="1" fill="#8a6a3a"/><rect x="24" y="33" width="1" height="1" fill="#5e5030"/><rect x="25" y="33" width="1" height="1" fill="#4e5a3e"/><rect x="26" y="33" width="1" height="1" fill="#48523a"/><rect x="27" y="33" width="1" height="1" fill="#3a3f2c"/><rect x="28" y="33" width="1" height="1" fill="#55603f"/><rect x="29" y="33" width="1" height="1" fill="#4e5a3e"/><rect x="30" y="33" width="1" height="1" fill="#7a6034"/><rect x="31" y="33" width="1" height="1" fill="#48523a"/><rect x="32" y="33" width="1" height="1" fill="#7a6034"/><rect x="33" y="33" width="1" height="1" fill="#9a7840"/><rect x="34" y="33" width="1" height="1" fill="#48523a"/><rect x="35" y="33" width="1" height="1" fill="#5e5030"/><rect x="36" y="33" width="1" height="1" fill="#4e5a3e"/><rect x="37" y="33" width="1" height="1" fill="#55603f"/><rect x="38" y="33" width="1" height="1" fill="#4e5a3e"/><rect x="20" y="34" width="1" height="1" fill="#4e5a3e"/><rect x="21" y="34" width="1" height="1" fill="#4e5a3e"/><rect x="22" y="34" width="1" height="1" fill="#55603f"/><rect x="23" y="34" width="1" height="1" fill="#434a34"/><rect x="24" y="34" width="1" height="1" fill="#5a5e40"/><rect x="25" y="34" width="1" height="1" fill="#9a7840"/><rect x="26" y="34" width="1" height="1" fill="#5e5030"/><rect x="28" y="34" width="1" height="1" fill="#4e5a3e"/><rect x="29" y="34" width="1" height="1" fill="#5a5e40"/><rect x="30" y="34" width="1" height="1" fill="#48523a"/><rect x="31" y="34" width="1" height="1" fill="#55603f"/><rect x="32" y="34" width="1" height="1" fill="#5a5e40"/><rect x="33" y="34" width="1" height="1" fill="#7a6034"/><rect x="34" y="34" width="1" height="1" fill="#55603f"/><rect x="35" y="34" width="1" height="1" fill="#5a5e40"/><rect x="36" y="34" width="1" height="1" fill="#5a5e40"/><rect x="37" y="34" width="1" height="1" fill="#9a7840"/><rect x="21" y="35" width="1" height="1" fill="#434a34"/><rect x="24" y="35" width="1" height="1" fill="#5a5e40"/><rect x="25" y="35" width="1" height="1" fill="#4e5a3e"/><rect x="26" y="35" width="1" height="1" fill="#4e5a3e"/><rect x="27" y="35" width="1" height="1" fill="#5a5e40"/><rect x="28" y="35" width="1" height="1" fill="#55603f"/><rect x="29" y="35" width="1" height="1" fill="#55603f"/><rect x="30" y="35" width="1" height="1" fill="#48523a"/><rect x="31" y="35" width="1" height="1" fill="#48523a"/><rect x="32" y="35" width="1" height="1" fill="#48523a"/><rect x="33" y="35" width="1" height="1" fill="#55603f"/><rect x="34" y="35" width="1" height="1" fill="#55603f"/><rect x="35" y="35" width="1" height="1" fill="#8a6a3a"/><rect x="36" y="35" width="1" height="1" fill="#48523a"/><rect x="22" y="36" width="1" height="1" fill="#55603f"/><rect x="23" y="36" width="1" height="1" fill="#7a6034"/><rect x="24" y="36" width="1" height="1" fill="#5a5e40"/><rect x="25" y="36" width="1" height="1" fill="#4e5a3e"/><rect x="26" y="36" width="1" height="1" fill="#5a5e40"/><rect x="27" y="36" width="1" height="1" fill="#5a5e40"/><rect x="28" y="36" width="1" height="1" fill="#48523a"/><rect x="29" y="36" width="1" height="1" fill="#8a6a3a"/><rect x="30" y="36" width="1" height="1" fill="#4e5a3e"/><rect x="31" y="36" width="1" height="1" fill="#48523a"/><rect x="32" y="36" width="1" height="1" fill="#434a34"/><rect x="33" y="36" width="1" height="1" fill="#4e5a3e"/><rect x="34" y="36" width="1" height="1" fill="#5e5030"/><rect x="35" y="36" width="1" height="1" fill="#434a34"/><rect x="23" y="37" width="1" height="1" fill="#9a7840"/><rect x="26" y="37" width="1" height="1" fill="#8a6a3a"/><rect x="27" y="37" width="1" height="1" fill="#8a6a3a"/><rect x="28" y="37" width="1" height="1" fill="#5a5e40"/><rect x="29" y="37" width="1" height="1" fill="#3a3f2c"/><rect x="31" y="37" width="1" height="1" fill="#48523a"/><rect x="33" y="37" width="1" height="1" fill="#48523a"/><rect x="34" y="37" width="1" height="1" fill="#434a34"/><rect x="26" y="38" width="1" height="1" fill="#55603f"/><rect x="28" y="38" width="1" height="1" fill="#8a6a3a"/><rect x="30" y="38" width="1" height="1" fill="#55603f"/><rect x="31" y="38" width="1" height="1" fill="#9a7840"/><rect x="26" y="39" width="1" height="1" fill="#3a2e20"/><rect x="27" y="39" width="1" height="1" fill="#4a3a28"/><rect x="28" y="39" width="1" height="1" fill="#a08050"/><rect x="29" y="39" width="1" height="1" fill="#4a3a28"/><rect x="30" y="39" width="1" height="1" fill="#a08050"/><rect x="31" y="39" width="1" height="1" fill="#a08050"/><rect x="26" y="40" width="1" height="1" fill="#a08050"/><rect x="27" y="40" width="1" height="1" fill="#4a3a28"/><rect x="28" y="40" width="1" height="1" fill="#4a3a28"/><rect x="29" y="40" width="1" height="1" fill="#3a2e20"/><rect x="30" y="40" width="1" height="1" fill="#3a2e20"/><rect x="31" y="40" width="1" height="1" fill="#a08050"/><rect x="26" y="41" width="1" height="1" fill="#3a2e20"/><rect x="27" y="41" width="1" height="1" fill="#6a5030"/><rect x="28" y="41" width="1" height="1" fill="#4a3a28"/><rect x="29" y="41" width="1" height="1" fill="#6a5030"/><rect x="30" y="41" width="1" height="1" fill="#6a5030"/><rect x="31" y="41" width="1" height="1" fill="#3a2e20"/><rect x="26" y="42" width="1" height="1" fill="#a08050"/><rect x="27" y="42" width="1" height="1" fill="#6a5030"/><rect x="28" y="42" width="1" height="1" fill="#a08050"/><rect x="29" y="42" width="1" height="1" fill="#4a3a28"/><rect x="30" y="42" width="1" height="1" fill="#a08050"/><rect x="31" y="42" width="1" height="1" fill="#6a5030"/><rect x="26" y="43" width="1" height="1" fill="#3a2e20"/><rect x="27" y="43" width="1" height="1" fill="#a08050"/><rect x="28" y="43" width="1" height="1" fill="#4a3a28"/><rect x="29" y="43" width="1" height="1" fill="#6a5030"/><rect x="30" y="43" width="1" height="1" fill="#4a3a28"/><rect x="31" y="43" width="1" height="1" fill="#6a5030"/><rect x="26" y="44" width="1" height="1" fill="#6a5030"/><rect x="27" y="44" width="1" height="1" fill="#4a3a28"/><rect x="28" y="44" width="1" height="1" fill="#4a3a28"/><rect x="29" y="44" width="1" height="1" fill="#4a3a28"/><rect x="30" y="44" width="1" height="1" fill="#3a2e20"/><rect x="31" y="44" width="1" height="1" fill="#4a3a28"/><circle cx="33.5" cy="24.5" r="1.1" fill="#8e2418"/><circle cx="26" cy="28" r="1.1" fill="#a06a28"/><circle cx="33" cy="28.5" r="1.1" fill="#962a18"/><circle cx="38" cy="28" r="1.1" fill="#b08030"/><circle cx="19" cy="32" r="1.1" fill="#8a2418"/><circle cx="24.5" cy="35.5" r="1.1" fill="#9a2c1a"/><circle cx="32" cy="35.5" r="1.1" fill="#9a5020"/><circle cx="27" cy="18" r="1.1" fill="#222222"/><circle cx="34" cy="10" r="1.4" fill="#2f6a2a"/><circle cx="35" cy="12.5" r="1.2" fill="#3b7a30"/><circle cx="32" cy="10.5" r="0.9" fill="#7a1c10"/><circle cx="25" cy="8.5" r="0.7" fill="#a07a40"/></svg>
<svg style="left:738px;top:74px" width="32" height="32" viewBox="0 0 54 54"><rect x="26" y="14" width="1" height="1" fill="#8a7040"/><rect x="27" y="14" width="1" height="1" fill="#6a5a38"/><rect x="30" y="14" width="1" height="1" fill="#6a5a38"/><rect x="31" y="14" width="1" height="1" fill="#8a7040"/><rect x="32" y="14" width="1" height="1" fill="#6a5a38"/><rect x="24" y="15" width="1" height="1" fill="#3a3a2a"/><rect x="25" y="15" width="1" height="1" fill="#3a3a2a"/><rect x="26" y="15" width="1" height="1" fill="#6a5a38"/><rect x="28" y="15" width="1" height="1" fill="#6a5a38"/><rect x="29" y="15" width="1" height="1" fill="#4e5a3e"/><rect x="30" y="15" width="1" height="1" fill="#4e5a3e"/><rect x="31" y="15" width="1" height="1" fill="#8a7040"/><rect x="32" y="15" width="1" height="1" fill="#3a3a2a"/><rect x="34" y="15" width="1" height="1" fill="#6a5a38"/><rect x="23" y="16" width="1" height="1" fill="#6a5a38"/><rect x="24" y="16" width="1" height="1" fill="#3a3a2a"/><rect x="25" y="16" width="1" height="1" fill="#4e5a3e"/><rect x="26" y="16" width="1" height="1" fill="#6a5a38"/><rect x="30" y="16" width="1" height="1" fill="#8a7040"/><rect x="31" y="16" width="1" height="1" fill="#8a7040"/><rect x="32" y="16" width="1" height="1" fill="#8a7040"/><rect x="34" y="16" width="1" height="1" fill="#3a3a2a"/><rect x="35" y="16" width="1" height="1" fill="#3a3a2a"/><rect x="23" y="17" width="1" height="1" fill="#4e5a3e"/><rect x="25" y="17" width="1" height="1" fill="#6a5a38"/><rect x="27" y="17" width="1" height="1" fill="#3a3a2a"/><rect x="28" y="17" width="1" height="1" fill="#8a7040"/><rect x="29" y="17" width="1" height="1" fill="#6a5a38"/><rect x="30" y="17" width="1" height="1" fill="#4e5a3e"/><rect x="31" y="17" width="1" height="1" fill="#4e5a3e"/><rect x="32" y="17" width="1" height="1" fill="#6a5a38"/><rect x="33" y="17" width="1" height="1" fill="#6a5a38"/><rect x="34" y="17" width="1" height="1" fill="#6a5a38"/><rect x="35" y="17" width="1" height="1" fill="#3a3a2a"/><rect x="23" y="18" width="1" height="1" fill="#8a7040"/><rect x="24" y="18" width="1" height="1" fill="#3a3a2a"/><rect x="26" y="18" width="1" height="1" fill="#4e5a3e"/><rect x="28" y="18" width="1" height="1" fill="#3a3a2a"/><rect x="31" y="18" width="1" height="1" fill="#6a5a38"/><rect x="32" y="18" width="1" height="1" fill="#6a5a38"/><rect x="33" y="18" width="1" height="1" fill="#3a3a2a"/><rect x="34" y="18" width="1" height="1" fill="#8a7040"/><rect x="35" y="18" width="1" height="1" fill="#3a3a2a"/><rect x="23" y="19" width="1" height="1" fill="#8a7040"/><rect x="25" y="19" width="1" height="1" fill="#6a5a38"/><rect x="27" y="19" width="1" height="1" fill="#3a3a2a"/><rect x="28" y="19" width="1" height="1" fill="#3a3a2a"/><rect x="31" y="19" width="1" height="1" fill="#6a5a38"/><rect x="32" y="19" width="1" height="1" fill="#6a5a38"/><rect x="33" y="19" width="1" height="1" fill="#4e5a3e"/><rect x="34" y="19" width="1" height="1" fill="#4e5a3e"/><rect x="24" y="20" width="1" height="1" fill="#5a5e40"/><rect x="25" y="20" width="1" height="1" fill="#4e5a3e"/><rect x="27" y="20" width="1" height="1" fill="#5a5e40"/><rect x="28" y="20" width="1" height="1" fill="#9a7840"/><rect x="30" y="20" width="1" height="1" fill="#4e5a3e"/><rect x="31" y="20" width="1" height="1" fill="#5a5e40"/><rect x="33" y="20" width="1" height="1" fill="#8a6a3a"/><rect x="23" y="21" width="1" height="1" fill="#9a7840"/><rect x="24" y="21" width="1" height="1" fill="#5e5030"/><rect x="25" y="21" width="1" height="1" fill="#434a34"/><rect x="26" y="21" width="1" height="1" fill="#434a34"/><rect x="27" y="21" width="1" height="1" fill="#7a6034"/><rect x="29" y="21" width="1" height="1" fill="#55603f"/><rect x="30" y="21" width="1" height="1" fill="#4e5a3e"/><rect x="31" y="21" width="1" height="1" fill="#9a7840"/><rect x="32" y="21" width="1" height="1" fill="#7a6034"/><rect x="33" y="21" width="1" height="1" fill="#7a6034"/><rect x="34" y="21" width="1" height="1" fill="#4e5a3e"/><rect x="22" y="22" width="1" height="1" fill="#434a34"/><rect x="23" y="22" width="1" height="1" fill="#5e5030"/><rect x="24" y="22" width="1" height="1" fill="#5a5e40"/><rect x="25" y="22" width="1" height="1" fill="#5e5030"/><rect x="26" y="22" width="1" height="1" fill="#55603f"/><rect x="27" y="22" width="1" height="1" fill="#7a6034"/><rect x="28" y="22" width="1" height="1" fill="#55603f"/><rect x="29" y="22" width="1" height="1" fill="#5e5030"/><rect x="30" y="22" width="1" height="1" fill="#55603f"/><rect x="31" y="22" width="1" height="1" fill="#48523a"/><rect x="32" y="22" width="1" height="1" fill="#5a5e40"/><rect x="33" y="22" width="1" height="1" fill="#5a5e40"/><rect x="34" y="22" width="1" height="1" fill="#8a6a3a"/><rect x="35" y="22" width="1" height="1" fill="#434a34"/><rect x="21" y="23" width="1" height="1" fill="#5e5030"/><rect x="22" y="23" width="1" height="1" fill="#4e5a3e"/><rect x="23" y="23" width="1" height="1" fill="#4e5a3e"/><rect x="24" y="23" width="1" height="1" fill="#48523a"/><rect x="25" y="23" width="1" height="1" fill="#8a6a3a"/><rect x="26" y="23" width="1" height="1" fill="#5e5030"/><rect x="27" y="23" width="1" height="1" fill="#55603f"/><rect x="28" y="23" width="1" height="1" fill="#9a7840"/><rect x="29" y="23" width="1" height="1" fill="#48523a"/><rect x="30" y="23" width="1" height="1" fill="#434a34"/><rect x="31" y="23" width="1" height="1" fill="#4e5a3e"/><rect x="32" y="23" width="1" height="1" fill="#55603f"/><rect x="33" y="23" width="1" height="1" fill="#7a6034"/><rect x="34" y="23" width="1" height="1" fill="#4e5a3e"/><rect x="35" y="23" width="1" height="1" fill="#5e5030"/><rect x="36" y="23" width="1" height="1" fill="#48523a"/><rect x="20" y="24" width="1" height="1" fill="#5e5030"/><rect x="21" y="24" width="1" height="1" fill="#8a6a3a"/><rect x="23" y="24" width="1" height="1" fill="#5e5030"/><rect x="24" y="24" width="1" height="1" fill="#55603f"/><rect x="25" y="24" width="1" height="1" fill="#55603f"/><rect x="27" y="24" width="1" height="1" fill="#3a3f2c"/><rect x="28" y="24" width="1" height="1" fill="#434a34"/><rect x="29" y="24" width="1" height="1" fill="#4e5a3e"/><rect x="30" y="24" width="1" height="1" fill="#5a5e40"/><rect x="31" y="24" width="1" height="1" fill="#434a34"/><rect x="32" y="24" width="1" height="1" fill="#8a6a3a"/><rect x="33" y="24" width="1" height="1" fill="#55603f"/><rect x="34" y="24" width="1" height="1" fill="#4e5a3e"/><rect x="35" y="24" width="1" height="1" fill="#3a3f2c"/><rect x="36" y="24" width="1" height="1" fill="#5a5e40"/><rect x="37" y="24" width="1" height="1" fill="#9a7840"/><rect x="19" y="25" width="1" height="1" fill="#48523a"/><rect x="20" y="25" width="1" height="1" fill="#4e5a3e"/><rect x="22" y="25" width="1" height="1" fill="#48523a"/><rect x="24" y="25" width="1" height="1" fill="#55603f"/><rect x="25" y="25" width="1" height="1" fill="#3a3f2c"/><rect x="26" y="25" width="1" height="1" fill="#434a34"/><rect x="27" y="25" width="1" height="1" fill="#4e5a3e"/><rect x="28" y="25" width="1" height="1" fill="#55603f"/><rect x="30" y="25" width="1" height="1" fill="#55603f"/><rect x="31" y="25" width="1" height="1" fill="#55603f"/><rect x="32" y="25" width="1" height="1" fill="#434a34"/><rect x="33" y="25" width="1" height="1" fill="#5a5e40"/><rect x="35" y="25" width="1" height="1" fill="#434a34"/><rect x="36" y="25" width="1" height="1" fill="#434a34"/><rect x="37" y="25" width="1" height="1" fill="#434a34"/><rect x="38" y="25" width="1" height="1" fill="#4e5a3e"/><rect x="20" y="26" width="1" height="1" fill="#5e5030"/><rect x="21" y="26" width="1" height="1" fill="#5a5e40"/><rect x="22" y="26" width="1" height="1" fill="#434a34"/><rect x="23" y="26" width="1" height="1" fill="#4e5a3e"/><rect x="24" y="26" width="1" height="1" fill="#7a6034"/><rect x="25" y="26" width="1" height="1" fill="#3a3f2c"/><rect x="26" y="26" width="1" height="1" fill="#4e5a3e"/><rect x="27" y="26" width="1" height="1" fill="#55603f"/><rect x="28" y="26" width="1" height="1" fill="#5a5e40"/><rect x="29" y="26" width="1" height="1" fill="#5a5e40"/><rect x="30" y="26" width="1" height="1" fill="#4e5a3e"/><rect x="31" y="26" width="1" height="1" fill="#4e5a3e"/><rect x="32" y="26" width="1" height="1" fill="#48523a"/><rect x="33" y="26" width="1" height="1" fill="#9a7840"/><rect x="34" y="26" width="1" height="1" fill="#4e5a3e"/><rect x="35" y="26" width="1" height="1" fill="#48523a"/><rect x="36" y="26" width="1" height="1" fill="#9a7840"/><rect x="37" y="26" width="1" height="1" fill="#8a6a3a"/><rect x="18" y="27" width="1" height="1" fill="#434a34"/><rect x="19" y="27" width="1" height="1" fill="#48523a"/><rect x="21" y="27" width="1" height="1" fill="#5e5030"/><rect x="22" y="27" width="1" height="1" fill="#5e5030"/><rect x="23" y="27" width="1" height="1" fill="#55603f"/><rect x="25" y="27" width="1" height="1" fill="#3a3f2c"/><rect x="26" y="27" width="1" height="1" fill="#48523a"/><rect x="27" y="27" width="1" height="1" fill="#5a5e40"/><rect x="28" y="27" width="1" height="1" fill="#4e5a3e"/><rect x="29" y="27" width="1" height="1" fill="#5a5e40"/><rect x="30" y="27" width="1" height="1" fill="#4e5a3e"/><rect x="31" y="27" width="1" height="1" fill="#48523a"/><rect x="32" y="27" width="1" height="1" fill="#434a34"/><rect x="33" y="27" width="1" height="1" fill="#48523a"/><rect x="34" y="27" width="1" height="1" fill="#4e5a3e"/><rect x="35" y="27" width="1" height="1" fill="#55603f"/><rect x="36" y="27" width="1" height="1" fill="#5e5030"/><rect x="37" y="27" width="1" height="1" fill="#5a5e40"/><rect x="38" y="27" width="1" height="1" fill="#5a5e40"/><rect x="39" y="27" width="1" height="1" fill="#434a34"/><rect x="18" y="28" width="1" height="1" fill="#9a7840"/><rect x="19" y="28" width="1" height="1" fill="#48523a"/><rect x="20" y="28" width="1" height="1" fill="#434a34"/><rect x="21" y="28" width="1" height="1" fill="#48523a"/><rect x="22" y="28" width="1" height="1" fill="#5e5030"/><rect x="23" y="28" width="1" height="1" fill="#9a7840"/><rect x="24" y="28" width="1" height="1" fill="#55603f"/><rect x="25" y="28" width="1" height="1" fill="#3a3f2c"/><rect x="26" y="28" width="1" height="1" fill="#434a34"/><rect x="27" y="28" width="1" height="1" fill="#5a5e40"/><rect x="28" y="28" width="1" height="1" fill="#55603f"/><rect x="29" y="28" width="1" height="1" fill="#4e5a3e"/><rect x="30" y="28" width="1" height="1" fill="#434a34"/><rect x="31" y="28" width="1" height="1" fill="#3a3f2c"/><rect x="32" y="28" width="1" height="1" fill="#434a34"/><rect x="33" y="28" width="1" height="1" fill="#4e5a3e"/><rect x="34" y="28" width="1" height="1" fill="#48523a"/><rect x="35" y="28" width="1" height="1" fill="#55603f"/><rect x="36" y="28" width="1" height="1" fill="#5a5e40"/><rect x="37" y="28" width="1" height="1" fill="#48523a"/><rect x="38" y="28" width="1" height="1" fill="#4e5a3e"/><rect x="39" y="28" width="1" height="1" fill="#5a5e40"/><rect x="18" y="29" width="1" height="1" fill="#4e5a3e"/><rect x="19" y="29" width="1" height="1" fill="#434a34"/><rect x="20" y="29" width="1" height="1" fill="#55603f"/><rect x="21" y="29" width="1" height="1" fill="#8a6a3a"/><rect x="22" y="29" width="1" height="1" fill="#5a5e40"/><rect x="23" y="29" width="1" height="1" fill="#4e5a3e"/><rect x="24" y="29" width="1" height="1" fill="#4e5a3e"/><rect x="25" y="29" width="1" height="1" fill="#55603f"/><rect x="26" y="29" width="1" height="1" fill="#5a5e40"/><rect x="27" y="29" width="1" height="1" fill="#7a6034"/><rect x="28" y="29" width="1" height="1" fill="#55603f"/><rect x="29" y="29" width="1" height="1" fill="#434a34"/><rect x="30" y="29" width="1" height="1" fill="#5a5e40"/><rect x="31" y="29" width="1" height="1" fill="#55603f"/><rect x="32" y="29" width="1" height="1" fill="#55603f"/><rect x="33" y="29" width="1" height="1" fill="#48523a"/><rect x="34" y="29" width="1" height="1" fill="#9a7840"/><rect x="35" y="29" width="1" height="1" fill="#9a7840"/><rect x="36" y="29" width="1" height="1" fill="#7a6034"/><rect x="37" y="29" width="1" height="1" fill="#48523a"/><rect x="38" y="29" width="1" height="1" fill="#5e5030"/><rect x="39" y="29" width="1" height="1" fill="#55603f"/><rect x="18" y="30" width="1" height="1" fill="#8a6a3a"/><rect x="20" y="30" width="1" height="1" fill="#434a34"/><rect x="21" y="30" width="1" height="1" fill="#9a7840"/><rect x="22" y="30" width="1" height="1" fill="#3a3f2c"/><rect x="23" y="30" width="1" height="1" fill="#4e5a3e"/><rect x="24" y="30" width="1" height="1" fill="#55603f"/><rect x="25" y="30" width="1" height="1" fill="#55603f"/><rect x="26" y="30" width="1" height="1" fill="#48523a"/><rect x="27" y="30" width="1" height="1" fill="#55603f"/><rect x="28" y="30" width="1" height="1" fill="#434a34"/><rect x="29" y="30" width="1" height="1" fill="#3a3f2c"/><rect x="30" y="30" width="1" height="1" fill="#48523a"/><rect x="32" y="30" width="1" height="1" fill="#48523a"/><rect x="33" y="30" width="1" height="1" fill="#434a34"/><rect x="34" y="30" width="1" height="1" fill="#5e5030"/><rect x="35" y="30" width="1" height="1" fill="#5a5e40"/><rect x="36" y="30" width="1" height="1" fill="#55603f"/><rect x="37" y="30" width="1" height="1" fill="#55603f"/><rect x="18" y="31" width="1" height="1" fill="#7a6034"/><rect x="19" y="31" width="1" height="1" fill="#8a6a3a"/><rect x="20" y="31" width="1" height="1" fill="#48523a"/><rect x="22" y="31" width="1" height="1" fill="#48523a"/><rect x="23" y="31" width="1" height="1" fill="#434a34"/><rect x="25" y="31" width="1" height="1" fill="#5a5e40"/><rect x="26" y="31" width="1" height="1" fill="#5a5e40"/><rect x="27" y="31" width="1" height="1" fill="#5a5e40"/><rect x="28" y="31" width="1" height="1" fill="#4e5a3e"/><rect x="29" y="31" width="1" height="1" fill="#55603f"/><rect x="30" y="31" width="1" height="1" fill="#48523a"/><rect x="31" y="31" width="1" height="1" fill="#434a34"/><rect x="32" y="31" width="1" height="1" fill="#8a6a3a"/><rect x="33" y="31" width="1" height="1" fill="#3a3f2c"/><rect x="34" y="31" width="1" height="1" fill="#48523a"/><rect x="35" y="31" width="1" height="1" fill="#4e5a3e"/><rect x="36" y="31" width="1" height="1" fill="#7a6034"/><rect x="37" y="31" width="1" height="1" fill="#5a5e40"/><rect x="38" y="31" width="1" height="1" fill="#9a7840"/><rect x="39" y="31" width="1" height="1" fill="#434a34"/><rect x="19" y="32" width="1" height="1" fill="#4e5a3e"/><rect x="20" y="32" width="1" height="1" fill="#5e5030"/><rect x="21" y="32" width="1" height="1" fill="#48523a"/><rect x="22" y="32" width="1" height="1" fill="#8a6a3a"/><rect x="23" y="32" width="1" height="1" fill="#434a34"/><rect x="24" y="32" width="1" height="1" fill="#3a3f2c"/><rect x="25" y="32" width="1" height="1" fill="#434a34"/><rect x="26" y="32" width="1" height="1" fill="#5a5e40"/><rect x="27" y="32" width="1" height="1" fill="#9a7840"/><rect x="28" y="32" width="1" height="1" fill="#5a5e40"/><rect x="29" y="32" width="1" height="1" fill="#3a3f2c"/><rect x="30" y="32" width="1" height="1" fill="#8a6a3a"/><rect x="31" y="32" width="1" height="1" fill="#55603f"/><rect x="32" y="32" width="1" height="1" fill="#55603f"/><rect x="33" y="32" width="1" height="1" fill="#4e5a3e"/><rect x="34" y="32" width="1" height="1" fill="#434a34"/><rect x="35" y="32" width="1" height="1" fill="#3a3f2c"/><rect x="36" y="32" width="1" height="1" fill="#3a3f2c"/><rect x="37" y="32" width="1" height="1" fill="#8a6a3a"/><rect x="38" y="32" width="1" height="1" fill="#5a5e40"/><rect x="20" y="33" width="1" height="1" fill="#9a7840"/><rect x="21" y="33" width="1" height="1" fill="#7a6034"/><rect x="22" y="33" width="1" height="1" fill="#55603f"/><rect x="23" y="33" width="1" height="1" fill="#8a6a3a"/><rect x="24" y="33" width="1" height="1" fill="#5e5030"/><rect x="25" y="33" width="1" height="1" fill="#4e5a3e"/><rect x="26" y="33" width="1" height="1" fill="#48523a"/><rect x="27" y="33" width="1" height="1" fill="#3a3f2c"/><rect x="28" y="33" width="1" height="1" fill="#55603f"/><rect x="29" y="33" width="1" height="1" fill="#4e5a3e"/><rect x="30" y="33" width="1" height="1" fill="#7a6034"/><rect x="31" y="33" width="1" height="1" fill="#48523a"/><rect x="32" y="33" width="1" height="1" fill="#7a6034"/><rect x="33" y="33" width="1" height="1" fill="#9a7840"/><rect x="34" y="33" width="1" height="1" fill="#48523a"/><rect x="35" y="33" width="1" height="1" fill="#5e5030"/><rect x="36" y="33" width="1" height="1" fill="#4e5a3e"/><rect x="37" y="33" width="1" height="1" fill="#55603f"/><rect x="38" y="33" width="1" height="1" fill="#4e5a3e"/><rect x="20" y="34" width="1" height="1" fill="#4e5a3e"/><rect x="21" y="34" width="1" height="1" fill="#4e5a3e"/><rect x="22" y="34" width="1" height="1" fill="#55603f"/><rect x="23" y="34" width="1" height="1" fill="#434a34"/><rect x="24" y="34" width="1" height="1" fill="#5a5e40"/><rect x="25" y="34" width="1" height="1" fill="#9a7840"/><rect x="26" y="34" width="1" height="1" fill="#5e5030"/><rect x="28" y="34" width="1" height="1" fill="#4e5a3e"/><rect x="29" y="34" width="1" height="1" fill="#5a5e40"/><rect x="30" y="34" width="1" height="1" fill="#48523a"/><rect x="31" y="34" width="1" height="1" fill="#55603f"/><rect x="32" y="34" width="1" height="1" fill="#5a5e40"/><rect x="33" y="34" width="1" height="1" fill="#7a6034"/><rect x="34" y="34" width="1" height="1" fill="#55603f"/><rect x="35" y="34" width="1" height="1" fill="#5a5e40"/><rect x="36" y="34" width="1" height="1" fill="#5a5e40"/><rect x="37" y="34" width="1" height="1" fill="#9a7840"/><rect x="21" y="35" width="1" height="1" fill="#434a34"/><rect x="24" y="35" width="1" height="1" fill="#5a5e40"/><rect x="25" y="35" width="1" height="1" fill="#4e5a3e"/><rect x="26" y="35" width="1" height="1" fill="#4e5a3e"/><rect x="27" y="35" width="1" height="1" fill="#5a5e40"/><rect x="28" y="35" width="1" height="1" fill="#55603f"/><rect x="29" y="35" width="1" height="1" fill="#55603f"/><rect x="30" y="35" width="1" height="1" fill="#48523a"/><rect x="31" y="35" width="1" height="1" fill="#48523a"/><rect x="32" y="35" width="1" height="1" fill="#48523a"/><rect x="33" y="35" width="1" height="1" fill="#55603f"/><rect x="34" y="35" width="1" height="1" fill="#55603f"/><rect x="35" y="35" width="1" height="1" fill="#8a6a3a"/><rect x="36" y="35" width="1" height="1" fill="#48523a"/><rect x="22" y="36" width="1" height="1" fill="#55603f"/><rect x="23" y="36" width="1" height="1" fill="#7a6034"/><rect x="24" y="36" width="1" height="1" fill="#5a5e40"/><rect x="25" y="36" width="1" height="1" fill="#4e5a3e"/><rect x="26" y="36" width="1" height="1" fill="#5a5e40"/><rect x="27" y="36" width="1" height="1" fill="#5a5e40"/><rect x="28" y="36" width="1" height="1" fill="#48523a"/><rect x="29" y="36" width="1" height="1" fill="#8a6a3a"/><rect x="30" y="36" width="1" height="1" fill="#4e5a3e"/><rect x="31" y="36" width="1" height="1" fill="#48523a"/><rect x="32" y="36" width="1" height="1" fill="#434a34"/><rect x="33" y="36" width="1" height="1" fill="#4e5a3e"/><rect x="34" y="36" width="1" height="1" fill="#5e5030"/><rect x="35" y="36" width="1" height="1" fill="#434a34"/><rect x="23" y="37" width="1" height="1" fill="#9a7840"/><rect x="26" y="37" width="1" height="1" fill="#8a6a3a"/><rect x="27" y="37" width="1" height="1" fill="#8a6a3a"/><rect x="28" y="37" width="1" height="1" fill="#5a5e40"/><rect x="29" y="37" width="1" height="1" fill="#3a3f2c"/><rect x="31" y="37" width="1" height="1" fill="#48523a"/><rect x="33" y="37" width="1" height="1" fill="#48523a"/><rect x="34" y="37" width="1" height="1" fill="#434a34"/><rect x="26" y="38" width="1" height="1" fill="#55603f"/><rect x="28" y="38" width="1" height="1" fill="#8a6a3a"/><rect x="30" y="38" width="1" height="1" fill="#55603f"/><rect x="31" y="38" width="1" height="1" fill="#9a7840"/><rect x="26" y="39" width="1" height="1" fill="#3a2e20"/><rect x="27" y="39" width="1" height="1" fill="#4a3a28"/><rect x="28" y="39" width="1" height="1" fill="#a08050"/><rect x="29" y="39" width="1" height="1" fill="#4a3a28"/><rect x="30" y="39" width="1" height="1" fill="#a08050"/><rect x="31" y="39" width="1" height="1" fill="#a08050"/><rect x="26" y="40" width="1" height="1" fill="#a08050"/><rect x="27" y="40" width="1" height="1" fill="#4a3a28"/><rect x="28" y="40" width="1" height="1" fill="#4a3a28"/><rect x="29" y="40" width="1" height="1" fill="#3a2e20"/><rect x="30" y="40" width="1" height="1" fill="#3a2e20"/><rect x="31" y="40" width="1" height="1" fill="#a08050"/><rect x="26" y="41" width="1" height="1" fill="#3a2e20"/><rect x="27" y="41" width="1" height="1" fill="#6a5030"/><rect x="28" y="41" width="1" height="1" fill="#4a3a28"/><rect x="29" y="41" width="1" height="1" fill="#6a5030"/><rect x="30" y="41" width="1" height="1" fill="#6a5030"/><rect x="31" y="41" width="1" height="1" fill="#3a2e20"/><rect x="26" y="42" width="1" height="1" fill="#a08050"/><rect x="27" y="42" width="1" height="1" fill="#6a5030"/><rect x="28" y="42" width="1" height="1" fill="#a08050"/><rect x="29" y="42" width="1" height="1" fill="#4a3a28"/><rect x="30" y="42" width="1" height="1" fill="#a08050"/><rect x="31" y="42" width="1" height="1" fill="#6a5030"/><rect x="26" y="43" width="1" height="1" fill="#3a2e20"/><rect x="27" y="43" width="1" height="1" fill="#a08050"/><rect x="28" y="43" width="1" height="1" fill="#4a3a28"/><rect x="29" y="43" width="1" height="1" fill="#6a5030"/><rect x="30" y="43" width="1" height="1" fill="#4a3a28"/><rect x="31" y="43" width="1" height="1" fill="#6a5030"/><rect x="26" y="44" width="1" height="1" fill="#6a5030"/><rect x="27" y="44" width="1" height="1" fill="#4a3a28"/><rect x="28" y="44" width="1" height="1" fill="#4a3a28"/><rect x="29" y="44" width="1" height="1" fill="#4a3a28"/><rect x="30" y="44" width="1" height="1" fill="#3a2e20"/><rect x="31" y="44" width="1" height="1" fill="#4a3a28"/><circle cx="33.5" cy="24.5" r="1.1" fill="#8e2418"/><circle cx="26" cy="28" r="1.1" fill="#a06a28"/><circle cx="33" cy="28.5" r="1.1" fill="#962a18"/><circle cx="38" cy="28" r="1.1" fill="#b08030"/><circle cx="19" cy="32" r="1.1" fill="#8a2418"/><circle cx="24.5" cy="35.5" r="1.1" fill="#9a2c1a"/><circle cx="32" cy="35.5" r="1.1" fill="#9a5020"/><circle cx="27" cy="18" r="1.1" fill="#222222"/><circle cx="34" cy="10" r="1.4" fill="#2f6a2a"/><circle cx="35" cy="12.5" r="1.2" fill="#3b7a30"/><circle cx="32" cy="10.5" r="0.9" fill="#7a1c10"/><circle cx="25" cy="8.5" r="0.7" fill="#a07a40"/></svg>
<svg style="left:657.5px;top:181.5px" width="9.5" height="10" viewBox="0 0 13 14"><path d="M6.3 0.6 L12.4 3 L6.3 5.8 L0.2 3 Z" fill="#82d4f8"/><path d="M0.2 3.6 L6 6.3 V13.5 L0.2 10.8 Z" fill="#8a8a8a"/><path d="M6.8 6.3 L12.4 3.6 V10.8 L6.8 13.5 Z" fill="#7fd4f9"/></svg>
<div class="t " style="left:668.2px;top:180px;font-size:10px;letter-spacing:0.35px;color:#d2d2d2">Ornamen...</div>
<svg style="left:657.5px;top:268px" width="9.5" height="10" viewBox="0 0 13 14"><path d="M6.3 0.6 L12.4 3 L6.3 5.8 L0.2 3 Z" fill="#82d4f8"/><path d="M0.2 3.6 L6 6.3 V13.5 L0.2 10.8 Z" fill="#8a8a8a"/><path d="M6.8 6.3 L12.4 3.6 V10.8 L6.8 13.5 Z" fill="#7fd4f9"/></svg>
<div class="t " style="left:668.2px;top:266.3px;font-size:10px;letter-spacing:0.35px;color:#e8e8e8">Ornamen...</div>
<svg style="left:0;top:0" width="769" height="458" viewBox="0 0 769 458">
<rect x="38.5" y="134.5" width="186.8" height="17.5" fill="none" stroke="#e8142c" stroke-width="3"/>
<path d="M247.3 141.2 L234 150.8 L244.3 161.8 M234 150.8 L643 211.2" fill="none" stroke="#e8142c" stroke-width="3" stroke-linecap="round" stroke-linejoin="round"/>
<rect x="643.5" y="198.8" width="85.5" height="90.5" fill="none" stroke="#e8142c" stroke-width="3"/>
</svg>
</body></html>
